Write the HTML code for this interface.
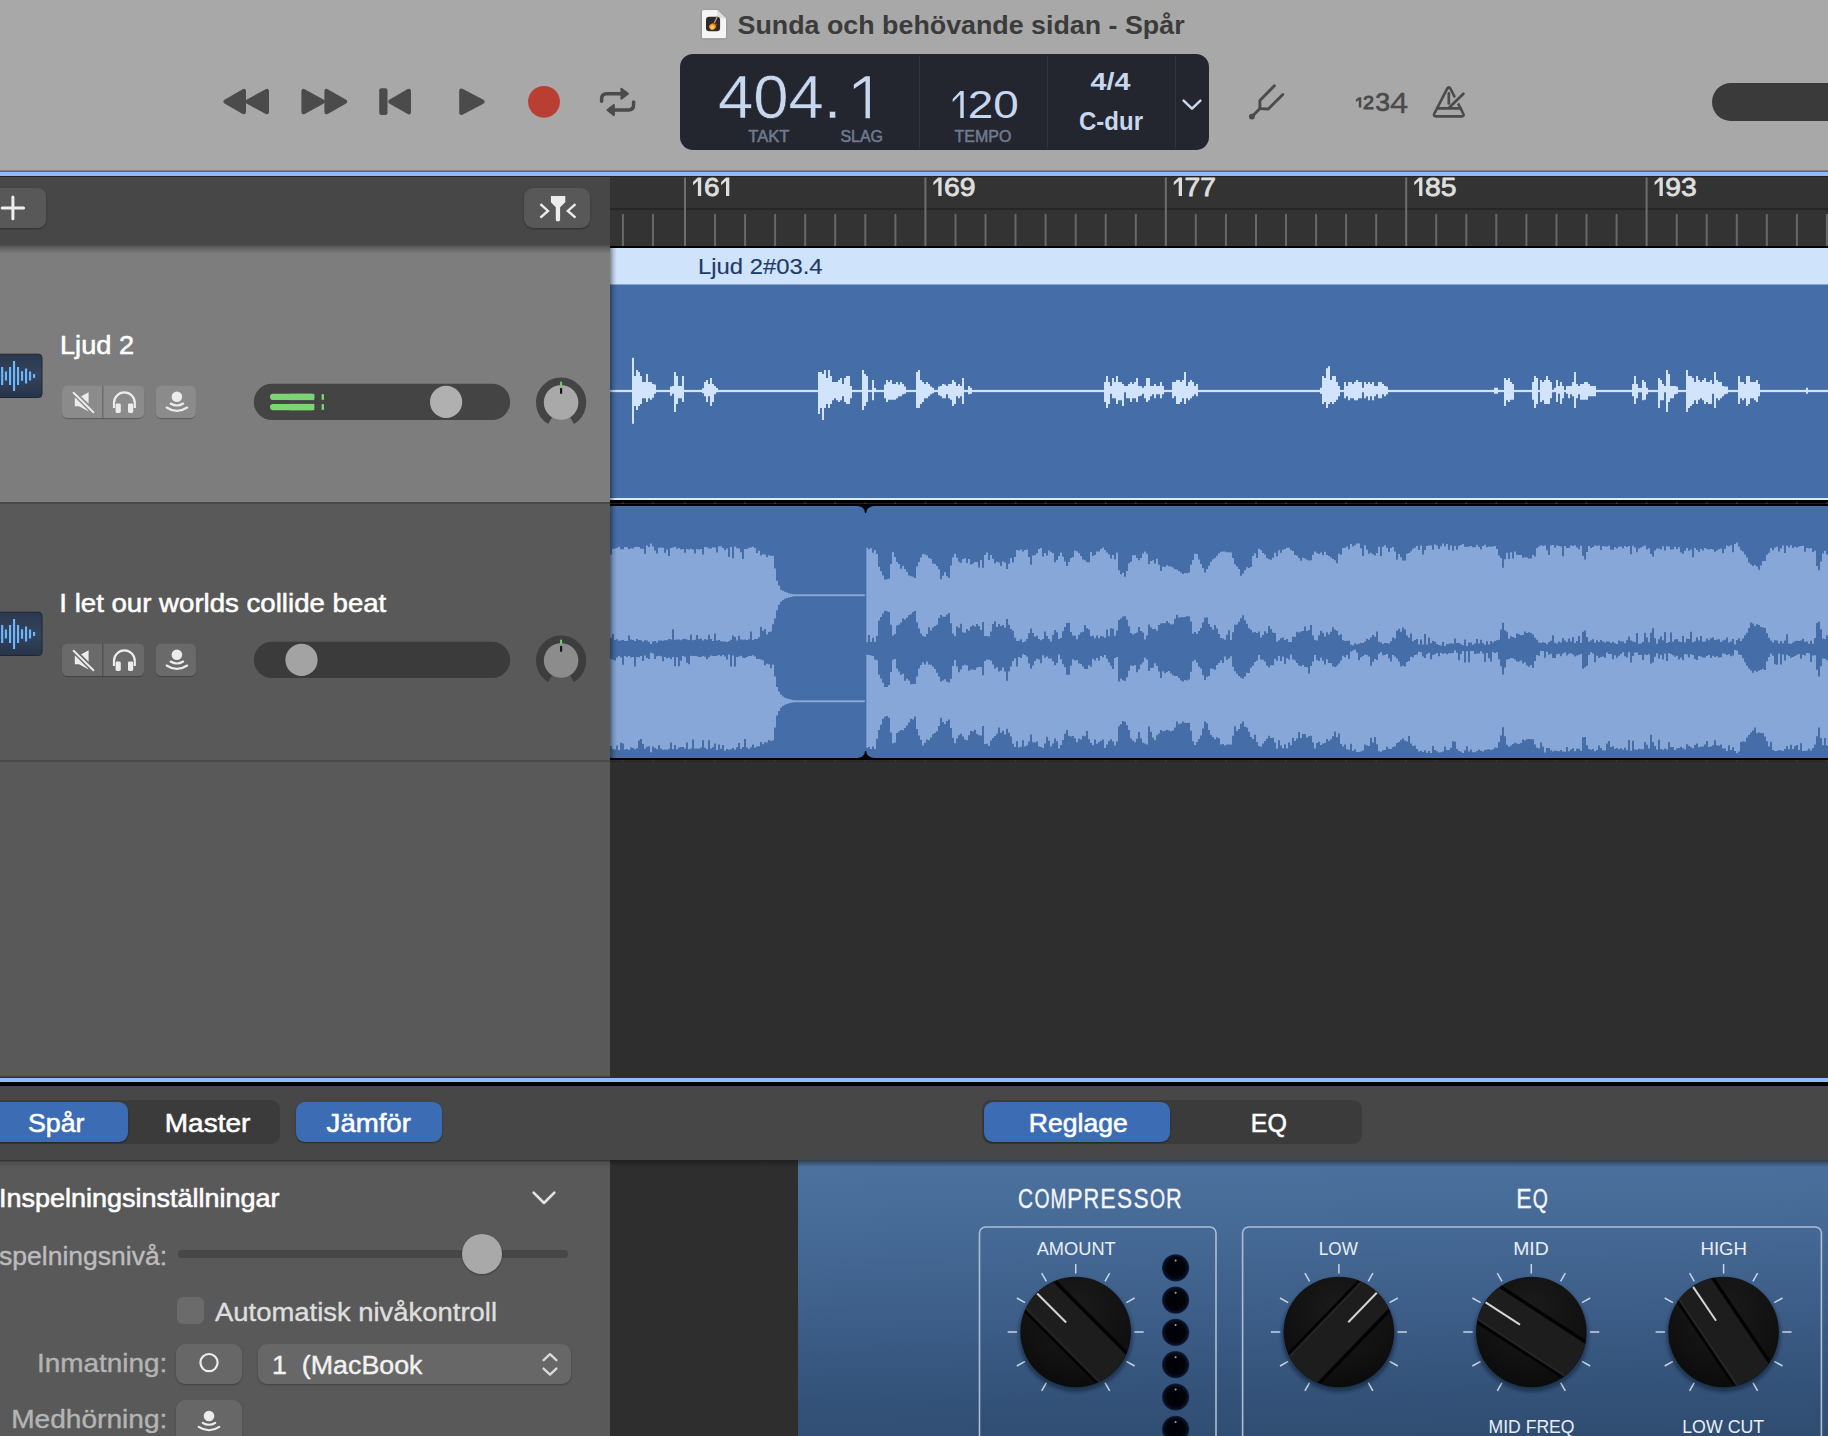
<!DOCTYPE html>
<html lang="sv"><head><meta charset="utf-8"><title>Sunda och behövande sidan - Spår</title>
<style>html,body{margin:0;padding:0;width:1828px;height:1436px;overflow:hidden;}body{background:#2e2e2e;}#app{position:absolute;left:0;top:0;width:1828px;height:1436px;overflow:hidden;background:#2e2e2e;font-family:"Liberation Sans",sans-serif;}svg{display:block;overflow:hidden}text{white-space:pre}</style>
</head><body><div id="app">
<!-- tracks area -->
<div style="position:absolute;left:610px;top:246px;width:1218px;height:832px;background:#2e2e2e;"></div>
<div style="position:absolute;left:610px;top:246px;width:1218px;height:2px;background:#000;"></div>
<div style="position:absolute;left:610px;top:248px;width:1218px;height:36px;background:#cfe3fb;"></div>
<div style="position:absolute;left:610px;top:284px;width:1218px;height:214px;background:#456da7;"></div>
<div style="position:absolute;left:610px;top:283.5px;width:1218px;height:1.5px;background:linear-gradient(#dcebff,#39609c);"></div>
<div style="position:absolute;left:610px;top:497.7px;width:1218px;height:2.5px;background:#dbeaff;"></div>
<div style="position:absolute;left:610px;top:500.2px;width:1218px;height:5.8px;background:#000;"></div>
<div style="position:absolute;left:610px;top:502.6px;width:1218px;height:1.2px;background:#1e1e1e;"></div>
<div style="position:absolute;left:610px;top:506px;width:255px;height:252px;background:#456da7;border-radius:0 5.5px 5.5px 0;"></div>
<div style="position:absolute;left:866.2px;top:506px;width:971.8px;height:252px;background:#456da7;border-radius:5.5px 0 0 5.5px;"></div>
<div style="position:absolute;left:610px;top:758px;width:1218px;height:2px;background:#000;"></div>
<div style="position:absolute;left:610px;top:760.6px;width:1218px;height:1.2px;background:#262626;"></div>
<svg style="position:absolute;left:610px;top:246px" width="1218" height="832" viewBox="610 246 1218 832"><defs><linearGradient id="lsh" x1="0" y1="0" x2="1" y2="0"><stop offset="0" stop-color="#000" stop-opacity="0.42"/><stop offset="0.5" stop-color="#000" stop-opacity="0.14"/><stop offset="1" stop-color="#000" stop-opacity="0"/></linearGradient></defs><rect x="610" y="389.9" width="1218" height="2.2" fill="#d2e4fb"/><path d="M632 391V357.8H634V376H636V370.1H638V372.1H640V376H642V382H644V382H646V374H648V382H650V382H652V384H654V384.4H656V391V393.8H654V397.7H652V399.7H650V398.2H648V402H646V398.2H644V398.2H642V404H640V406H638V410H636V406H634V423.8H632ZM670 391V386.4H672V385.9H674V372.1H676V376H678V385.9H680V385.9H682V376H684V391V402.1H682V398.2H680V398.2H678V404H676V412H674V393.8H672V395.7H670ZM702 391V388.3H704V382H706V380H708V384H710V378H712V384H714V386H716V388H718V391V392.3H716V394.2H714V402H712V406H710V396.2H708V402.1H706V396.2H704V393.3H702ZM818 391V372.1H820V372.1H822V374H824V370.1H826V378H828V370.1H830V376H832V382H834V382H836V382H838V380H840V378H842V384H844V378H846V376H848V376H850V386H852V391V398.2H850V404H848V404H846V402.1H844V396.2H842V400.2H840V402.1H838V400.2H836V398.2H834V400.2H832V404H830V408H828V404H826V408H824V419.9H822V408H820V413.9H818ZM862 391V370.1H864V374H866V376H868V391V402H866V406H864V410H862ZM872 391V380H874V388H876V391V392H874V400.2H872ZM884 391V384.4H886V380H888V382H890V380H892V384H894V384H896V382H898V384.4H900V382H902V384H904V386.4H906V391V393.8H904V394.2H902V396.2H900V396.2H898V398.2H896V399.7H894V399.7H892V399.7H890V399.7H888V402.1H886V398.2H884ZM916 391V372.1H918V370.1H920V380H922V382H924V384H926V382H928V384H930V386.4H932V387.8H934V391V393.3H932V394.2H930V396.2H928V398.2H926V398.2H924V402.1H922V404H920V408H918V408H916ZM938 391V386.4H940V385.9H942V384H944V384.4H946V386H948V384H950V384H952V380H954V382H956V386H958V384H960V386H962V378H964V391V404H962V396.2H960V398.2H958V396.2H956V404H954V406H952V399.7H950V398.2H948V394.2H946V398.2H944V398.2H942V396.2H940V395.2H938ZM968 391V385.9H970V387.8H972V391V393.8H970V394.2H968ZM1104 391V382H1106V376H1108V382H1110V386H1112V378H1114V382H1116V376H1118V382H1120V382H1122V384H1124V386H1126V386H1128V384H1130V382H1132V384H1134V382H1136V378H1138V386H1140V386H1142V387.8H1144V386H1146V378H1148V378H1150V386H1152V386H1154V384H1156V386H1158V386H1160V382H1162V386H1164V391V394.2H1162V398.2H1160V394.2H1158V394.2H1156V398.2H1154V394.2H1152V396.2H1150V400.2H1148V402H1146V398.2H1144V393.8H1142V395.7H1140V396.2H1138V402H1136V398.2H1134V398.2H1132V402H1130V398.2H1128V398.2H1126V392.3H1124V406H1122V400.2H1120V400.2H1118V404H1116V398.2H1114V398.2H1112V393.8H1110V404H1108V408H1106V402H1104ZM1172 391V382H1174V382H1176V380H1178V380H1180V382H1182V380H1184V372.1H1186V386H1188V382H1190V380H1192V382H1194V386H1196V384H1198V391V396.2H1196V394.2H1194V396.2H1192V398.2H1190V400.2H1188V398.2H1186V404H1184V398.2H1182V402H1180V404H1178V404H1176V396.2H1174V398.2H1172ZM1320 391V387.8H1322V376H1324V378H1326V368.2H1328V366.2H1330V380H1332V376H1334V376H1336V382H1338V386H1340V391V396.2H1338V399.7H1336V402H1334V404H1332V402H1330V404H1328V408H1326V402H1324V404H1322V393.8H1320ZM1344 391V382H1346V386H1348V382H1350V382H1352V384H1354V382H1356V380H1358V382H1360V382H1362V387.8H1364V382H1366V384H1368V382H1370V384H1372V382H1374V386H1376V386H1378V382H1380V382H1382V384H1384V386H1386V386.4H1388V391V394.2H1386V396.2H1384V394.2H1382V398.2H1380V398.2H1378V394.2H1376V396.2H1374V400.2H1372V396.2H1370V400.2H1368V396.2H1366V398.2H1364V392.3H1362V398.2H1360V398.2H1358V400.2H1356V400.2H1354V398.2H1352V398.2H1350V400.2H1348V396.2H1346V398.2H1344ZM1494 391V387.8H1496V387.8H1498V391V393.8H1496V393.8H1494ZM1504 391V378H1506V380H1508V378H1510V382H1512V384H1514V391V399.7H1512V399.7H1510V402H1508V400.2H1506V406H1504ZM1532 391V382H1534V376H1536V378H1538V391V404H1536V408H1534V399.7H1532ZM1540 391V380H1542V382H1544V380H1546V376H1548V380H1550V382H1552V389.8H1554V387.8H1556V391V392H1554V392.3H1552V398.2H1550V404H1548V404H1546V404H1544V400.2H1542V402H1540ZM1556 391V380H1558V386H1560V382H1562V386H1564V391V398.2H1562V404H1560V393.8H1558V402H1556ZM1566 391V386H1568V386H1570V386H1572V382H1574V372.1H1576V384H1578V386H1580V384H1582V384H1584V382H1586V382H1588V384H1590V386H1592V386H1594V386H1596V391V396.2H1594V396.2H1592V396.2H1590V396.2H1588V399.7H1586V399.7H1584V399.7H1582V399.7H1580V394.2H1578V398.2H1576V408H1574V396.2H1572V394.2H1570V398.2H1568V393.8H1566ZM1632 391V384H1634V376H1636V384H1638V388H1640V388H1642V391V392.3H1640V392.3H1638V398.2H1636V404H1634V396.2H1632ZM1642 391V380H1644V382H1646V387.8H1648V391V394.2H1646V399.7H1644V400.2H1642ZM1658 391V378H1660V380H1662V384H1664V386H1666V370.1H1668V374H1670V386H1672V386H1674V386H1676V386.4H1678V391V393.8H1676V394.2H1674V398.2H1672V398.2H1670V402H1668V412H1666V392.3H1664V400.2H1662V400.2H1660V408H1658ZM1686 391V370.1H1688V376H1690V376H1692V378H1694V382H1696V376H1698V380H1700V382H1702V380H1704V378H1706V382H1708V382H1710V380H1712V384H1714V372.1H1716V380H1718V382H1720V382H1722V386H1724V386.4H1726V386.4H1728V391V393.8H1726V394.2H1724V396.2H1722V398.2H1720V400.2H1718V398.2H1716V408H1714V393.8H1712V404H1710V404H1708V402H1706V404H1704V400.2H1702V398.2H1700V399.7H1698V404H1696V400.2H1694V404H1692V406H1690V408H1688V412H1686ZM1738 391V376H1740V382H1742V382H1744V384H1746V376H1748V376H1750V382H1752V382H1754V382H1756V380H1758V384H1760V391V396.2H1758V402H1756V400.2H1754V398.2H1752V398.2H1750V404H1748V406H1746V398.2H1744V400.2H1742V398.2H1740V404H1738ZM1806 391V387.8H1808V391V393.8H1806Z" fill="#d2e4fb"/><path d="M610 595.3V554.4H612V549.0H614V548.6H616V547.9H618V546.8H620V549.2H622V549.3H624V546.9H626V547.2H628V549.2H630V548.3H632V548.5H634V547.0H636V546.8H638V546.9H640V548.8H642V548.7H644V553.9H646V545.5H648V547.1H650V543.6H652V546.5H654V550.5H656V553.4H658V547.8H660V547.5H662V547.8H664V552.7H666V549.4H668V556.0H670V548.1H672V547.4H674V546.8H676V548.7H678V548.0H680V549.6H682V549.1H684V552.7H686V548.9H688V549.4H690V548.7H692V549.5H694V553.4H696V549.1H698V549.4H700V548.9H702V554.6H704V547.1H706V547.3H708V548.6H710V548.6H712V547.3H714V547.5H716V552.4H718V546.2H720V546.3H722V548.1H724V550.2H726V548.4H728V557.1H730V547.1H732V558.3H734V546.5H736V548.3H738V548.4H740V552.2H742V558.9H744V549.1H746V548.9H748V547.7H750V547.4H752V546.7H754V548.1H756V552.9H758V550.7H760V555.6H762V554.2H764V554.6H766V557.2H768V555.3H770V556.1H772V555.8H774V568.4H776V580.8H778V585.6H780V589.7H782V590.7H784V591.8H786V592.6H788V593.2H790V593.7H792V594.0H794V594.3H796V594.3H798V594.3H800V594.3H802V594.3H804V594.3H806V594.3H808V594.3H810V594.3H812V594.3H814V594.3H816V594.3H818V594.3H820V594.3H822V594.3H824V594.3H826V594.3H828V594.3H830V594.3H832V594.3H834V594.3H836V594.3H838V594.3H840V594.3H842V594.3H844V594.3H846V594.3H848V594.3H850V594.3H852V594.3H854V594.3H856V594.3H858V594.3H860V594.3H862V594.3H864V594.3H866V547.7H868V549.2H870V548.3H872V552.8H874V549.9H876V554.1H878V566.7H880V571.3H882V575.6H884V579.7H886V579.2H888V578.8H890V564.0H892V551.9H894V557.0H896V562.1H898V564.1H900V568.7H902V565.8H904V568.9H906V571.8H908V575.6H910V576.2H912V576.7H914V578.0H916V566.4H918V562.0H920V557.5H922V554.0H924V554.6H926V555.4H928V558.1H930V558.8H932V563.6H934V563.9H936V566.0H938V569.2H940V579.3H942V575.7H944V572.2H946V576.2H948V578.0H950V565.4H952V557.4H954V553.8H956V557.8H958V561.8H960V562.7H962V558.9H964V558.2H966V563.1H968V559.0H970V564.5H972V563.6H974V562.1H976V562.1H978V567.5H980V560.0H982V567.8H984V554.9H986V552.4H988V560.0H990V555.0H992V558.7H994V563.4H996V561.8H998V562.4H1000V566.0H1002V561.4H1004V562.5H1006V568.9H1008V563.7H1010V558.1H1012V562.4H1014V557.0H1016V549.9H1018V550.6H1020V549.6H1022V551.6H1024V549.9H1026V549.6H1028V557.0H1030V564.8H1032V555.6H1034V555.1H1036V553.2H1038V549.1H1040V547.9H1042V556.6H1044V552.9H1046V555.5H1048V550.6H1050V552.1H1052V552.9H1054V562.2H1056V560.1H1058V556.0H1060V552.4H1062V556.8H1064V561.6H1066V565.9H1068V561.9H1070V558.1H1072V557.0H1074V550.6H1076V551.2H1078V553.3H1080V555.9H1082V559.4H1084V560.3H1086V562.3H1088V562.3H1090V551.9H1092V555.9H1094V555.0H1096V551.6H1098V551.5H1100V548.9H1102V547.6H1104V550.0H1106V552.4H1108V554.4H1110V558.5H1112V555.0H1114V559.4H1116V552.4H1118V570.3H1120V574.2H1122V572.7H1124V576.7H1126V571.1H1128V563.3H1130V561.7H1132V555.2H1134V555.0H1136V558.0H1138V560.3H1140V557.9H1142V553.6H1144V551.4H1146V553.7H1148V564.1H1150V560.9H1152V560.2H1154V563.6H1156V558.7H1158V564.7H1160V571.1H1162V566.6H1164V566.9H1166V565.3H1168V566.2H1170V566.4H1172V567.5H1174V569.2H1176V569.5H1178V571.1H1180V572.5H1182V574.0H1184V573.1H1186V573.2H1188V572.6H1190V564.8H1192V559.9H1194V553.7H1196V554.1H1198V559.6H1200V564.0H1202V567.9H1204V572.6H1206V568.9H1208V565.8H1210V561.7H1212V559.2H1214V558.0H1216V555.7H1218V553.3H1220V551.7H1222V551.5H1224V551.5H1226V552.2H1228V552.2H1230V552.6H1232V557.9H1234V564.2H1236V566.5H1238V569.1H1240V575.7H1242V573.4H1244V570.3H1246V567.3H1248V568.1H1250V567.1H1252V556.1H1254V553.2H1256V557.9H1258V548.8H1260V550.1H1262V552.9H1264V554.4H1266V558.1H1268V559.3H1270V559.8H1272V557.8H1274V552.8H1276V556.3H1278V550.3H1280V552.8H1282V549.8H1284V549.1H1286V547.8H1288V547.8H1290V550.1H1292V551.1H1294V555.0H1296V555.5H1298V557.9H1300V560.7H1302V557.8H1304V558.5H1306V559.8H1308V560.5H1310V560.2H1312V554.8H1314V551.6H1316V552.9H1318V554.1H1320V552.6H1322V555.3H1324V551.7H1326V555.1H1328V556.0H1330V557.6H1332V559.0H1334V560.3H1336V563.2H1338V553.8H1340V554.8H1342V548.1H1344V547.7H1346V546.6H1348V549.2H1350V543.9H1352V546.5H1354V545.3H1356V543.6H1358V543.5H1360V548.2H1362V555.9H1364V545.3H1366V549.7H1368V553.8H1370V552.8H1372V554.2H1374V555.4H1376V553.1H1378V546.7H1380V555.9H1382V546.7H1384V545.3H1386V547.8H1388V552.1H1390V548.0H1392V546.9H1394V551.5H1396V559.7H1398V553.9H1400V557.3H1402V560.6H1404V560.4H1406V553.8H1408V553.0H1410V551.2H1412V548.7H1414V547.7H1416V546.0H1418V550.0H1420V545.6H1422V554.6H1424V550.0H1426V546.1H1428V545.4H1430V545.6H1432V549.7H1434V544.4H1436V545.6H1438V549.1H1440V546.3H1442V543.5H1444V546.5H1446V543.9H1448V549.7H1450V545.4H1452V550.8H1454V545.9H1456V549.7H1458V545.8H1460V544.9H1462V544.0H1464V546.7H1466V547.1H1468V546.5H1470V546.0H1472V547.2H1474V547.3H1476V544.8H1478V546.9H1480V549.5H1482V545.9H1484V544.8H1486V547.3H1488V546.6H1490V546.8H1492V546.6H1494V546.0H1496V549.1H1498V555.5H1500V558.0H1502V567.7H1504V559.2H1506V552.8H1508V559.0H1510V552.2H1512V558.4H1514V551.6H1516V554.7H1518V554.9H1520V555.0H1522V557.8H1524V557.2H1526V557.6H1528V558.6H1530V558.4H1532V555.0H1534V556.4H1536V548.1H1538V546.6H1540V545.2H1542V546.0H1544V545.6H1546V550.3H1548V555.0H1550V545.4H1552V545.1H1554V547.4H1556V545.5H1558V545.9H1560V546.6H1562V556.2H1564V546.0H1566V547.9H1568V547.7H1570V545.5H1572V545.9H1574V545.2H1576V547.6H1578V549.3H1580V545.7H1582V555.8H1584V559.5H1586V552.0H1588V546.0H1590V548.0H1592V547.1H1594V545.4H1596V545.7H1598V545.4H1600V549.9H1602V545.9H1604V546.5H1606V546.5H1608V545.7H1610V549.7H1612V549.7H1614V547.2H1616V548.4H1618V546.8H1620V546.6H1622V548.3H1624V546.0H1626V547.0H1628V546.1H1630V554.3H1632V545.7H1634V547.5H1636V552.3H1638V548.4H1640V547.6H1642V546.6H1644V545.4H1646V549.5H1648V548.2H1650V554.0H1652V556.7H1654V550.6H1656V548.5H1658V548.4H1660V549.4H1662V546.3H1664V550.5H1666V546.3H1668V546.4H1670V549.4H1672V549.2H1674V546.7H1676V548.9H1678V547.2H1680V552.6H1682V553.8H1684V550.8H1686V548.0H1688V550.8H1690V549.5H1692V557.3H1694V547.9H1696V550.0H1698V551.8H1700V549.0H1702V550.4H1704V548.1H1706V548.9H1708V549.5H1710V548.9H1712V549.6H1714V551.8H1716V550.4H1718V549.3H1720V548.4H1722V553.3H1724V548.8H1726V545.5H1728V546.2H1730V545.2H1732V552.3H1734V544.1H1736V542.4H1738V546.6H1740V550.2H1742V551.5H1744V554.4H1746V557.4H1748V562.4H1750V564.4H1752V566.0H1754V564.9H1756V566.4H1758V569.8H1760V565.5H1762V561.1H1764V560.9H1766V554.8H1768V552.7H1770V548.1H1772V550.3H1774V547.4H1776V546.8H1778V551.6H1780V548.4H1782V545.4H1784V552.9H1786V545.6H1788V547.6H1790V545.3H1792V548.1H1794V546.8H1796V547.5H1798V546.4H1800V545.9H1802V545.7H1804V551.7H1806V548.0H1808V548.5H1810V547.9H1812V552.1H1814V550.6H1816V566.0H1818V570.2H1820V561.5H1822V553.6H1824V550.8H1826V554.6H1828V595.3V635.2H1826V638.9H1824V638.6H1822V629.2H1820V621.4H1818V623.1H1816V638.0H1814V643.7H1812V640.8H1810V643.7H1808V641.6H1806V641.8H1804V638.7H1802V640.5H1800V641.0H1798V640.8H1796V641.2H1794V642.6H1792V643.7H1790V643.4H1788V634.2H1786V640.4H1784V643.3H1782V641.0H1780V643.6H1778V640.5H1776V640.2H1774V642.4H1772V640.4H1770V637.8H1768V633.3H1766V627.9H1764V627.5H1762V627.1H1760V625.1H1758V624.3H1756V626.3H1754V623.5H1752V622.5H1750V628.0H1748V632.8H1746V635.2H1744V638.6H1742V640.9H1740V638.3H1738V640.0H1736V644.6H1734V639.0H1732V641.5H1730V642.4H1728V637.6H1726V639.8H1724V640.4H1722V642.1H1720V639.2H1718V639.6H1716V640.1H1714V637.6H1712V638.2H1710V640.3H1708V638.6H1706V641.5H1704V641.7H1702V635.9H1700V640.5H1698V637.2H1696V641.2H1694V642.3H1692V631.7H1690V639.0H1688V638.7H1686V642.6H1684V636.0H1682V642.0H1680V641.6H1678V639.1H1676V639.5H1674V641.8H1672V632.4H1670V641.9H1668V643.1H1666V631.9H1664V640.3H1662V636.4H1660V639.3H1658V643.8H1656V638.3H1654V628.3H1652V632.7H1650V642.2H1648V637.6H1646V632.7H1644V642.0H1642V643.6H1640V643.7H1638V633.0H1636V642.0H1634V641.6H1632V640.6H1630V636.4H1628V640.3H1626V643.3H1624V641.4H1622V641.6H1620V640.5H1618V644.1H1616V643.3H1614V641.8H1612V642.9H1610V641.5H1608V641.5H1606V642.6H1604V641.6H1602V639.9H1600V641.9H1598V640.2H1596V642.7H1594V639.2H1592V640.4H1590V641.8H1588V637.0H1586V630.4H1584V631.8H1582V643.1H1580V636.0H1578V641.1H1576V643.1H1574V637.3H1572V641.4H1570V638.4H1568V641.9H1566V640.4H1564V638.1H1562V642.6H1560V641.6H1558V643.4H1556V642.8H1554V635.2H1552V640.8H1550V642.1H1548V644.2H1546V642.8H1544V642.3H1542V642.9H1540V642.4H1538V639.7H1536V637.7H1534V634.6H1532V633.1H1530V632.3H1528V632.9H1526V631.6H1524V635.1H1522V635.3H1520V634.3H1518V633.5H1516V638.1H1514V636.9H1512V636.3H1510V638.7H1508V631.7H1506V630.3H1504V622.8H1502V629.4H1500V639.7H1498V640.2H1496V641.1H1494V642.6H1492V641.1H1490V644.6H1488V641.3H1486V644.7H1484V642.9H1482V639.7H1480V643.5H1478V639.1H1476V643.5H1474V644.8H1472V642.4H1470V642.4H1468V645.9H1466V639.4H1464V645.2H1462V644.2H1460V643.0H1458V643.1H1456V638.4H1454V643.7H1452V643.2H1450V643.8H1448V643.9H1446V646.0H1444V641.7H1442V645.4H1440V645.0H1438V643.9H1436V641.7H1434V641.0H1432V643.2H1430V637.4H1428V644.4H1426V633.9H1424V644.4H1422V639.6H1420V644.4H1418V639.0H1416V640.0H1414V641.2H1412V633.4H1410V637.8H1408V635.6H1406V629.4H1404V627.4H1402V631.8H1400V628.8H1398V630.8H1396V638.4H1394V637.5H1392V641.3H1390V643.4H1388V643.1H1386V643.0H1384V643.9H1382V642.5H1380V641.7H1378V631.4H1376V636.8H1374V634.9H1372V637.6H1370V639.8H1368V638.8H1366V641.4H1364V642.9H1362V642.8H1360V643.8H1358V644.2H1356V643.4H1354V645.4H1352V644.7H1350V640.7H1348V640.7H1346V640.9H1344V640.2H1342V634.3H1340V635.3H1338V630.7H1336V629.8H1334V627.3H1332V631.7H1330V634.6H1328V632.2H1326V636.6H1324V632.8H1322V630.8H1320V635.3H1318V640.5H1316V640.0H1314V635.4H1312V625.0H1310V630.1H1308V630.9H1306V626.6H1304V630.9H1302V631.5H1300V632.4H1298V631.7H1296V637.0H1294V636.4H1292V642.1H1290V641.9H1288V638.9H1286V640.0H1284V637.4H1282V638.2H1280V640.2H1278V641.7H1276V632.9H1274V632.5H1272V628.9H1270V626.0H1268V633.2H1266V631.3H1264V635.1H1262V637.5H1260V631.4H1258V633.0H1256V631.9H1254V632.4H1252V629.8H1250V628.2H1248V623.8H1246V620.2H1244V615.3H1242V618.3H1240V621.7H1238V624.5H1236V624.8H1234V632.2H1232V639.9H1230V630.3H1228V634.8H1226V639.8H1224V638.4H1222V637.9H1220V633.9H1218V628.5H1216V625.0H1214V629.7H1212V626.9H1210V623.9H1208V617.6H1206V617.4H1204V622.6H1202V627.9H1200V631.0H1198V634.1H1196V631.9H1194V633.4H1192V621.6H1190V616.2H1188V616.3H1186V616.9H1184V617.2H1182V617.2H1180V617.6H1178V614.7H1176V618.7H1174V624.3H1172V624.5H1170V623.0H1168V621.1H1166V623.3H1164V623.2H1162V623.6H1160V625.1H1158V630.7H1156V629.1H1154V629.3H1152V627.5H1150V624.5H1148V635.6H1146V639.6H1144V632.5H1142V630.9H1140V627.1H1138V632.6H1136V633.6H1134V634.5H1132V633.0H1130V626.3H1128V619.8H1126V616.2H1124V616.4H1122V618.6H1120V620.0H1118V630.4H1116V635.8H1114V628.7H1112V628.2H1110V636.2H1108V629.4H1106V637.8H1104V636.5H1102V636.1H1100V638.2H1098V635.6H1096V638.3H1094V635.8H1092V636.2H1090V629.5H1088V628.3H1086V624.9H1084V631.7H1082V632.6H1080V634.7H1078V639.3H1076V635.7H1074V635.4H1072V632.1H1070V622.7H1068V623.0H1066V627.1H1064V631.3H1062V638.0H1060V638.9H1058V632.3H1056V630.0H1054V634.7H1052V641.4H1050V638.9H1048V635.9H1046V631.5H1044V639.1H1042V640.3H1040V639.0H1038V635.7H1036V636.8H1034V633.1H1032V628.4H1030V633.3H1028V639.1H1026V641.5H1024V642.2H1022V639.2H1020V640.8H1018V641.1H1016V637.7H1014V630.8H1012V628.9H1010V624.8H1008V619.0H1006V627.7H1004V625.0H1002V626.1H1000V624.1H998V627.0H996V621.2H994V623.9H992V631.4H990V636.4H988V636.0H986V635.9H984V622.0H982V630.0H980V626.2H978V624.1H976V626.5H974V625.3H972V626.4H970V630.7H968V629.1H966V632.8H964V632.3H962V623.7H960V627.8H958V626.5H956V636.3H954V633.4H952V623.3H950V613.1H948V614.4H946V616.7H944V616.8H942V615.1H940V617.9H938V624.7H936V626.1H934V627.6H932V630.4H930V627.2H928V633.9H926V636.8H924V636.1H922V633.4H920V628.6H918V622.3H916V611.0H914V612.1H912V614.2H910V614.9H908V617.7H906V619.4H904V618.4H902V622.4H900V624.8H898V625.5H896V634.0H894V635.4H892V624.7H890V612.1H888V611.2H886V610.8H884V613.5H882V616.9H880V620.4H878V636.1H876V642.1H874V637.8H872V641.9H870V635.1H868V642.2H866V596.2H864V596.2H862V596.2H860V596.2H858V596.2H856V596.2H854V596.2H852V596.2H850V596.2H848V596.2H846V596.2H844V596.2H842V596.2H840V596.2H838V596.2H836V596.2H834V596.2H832V596.2H830V596.2H828V596.2H826V596.2H824V596.2H822V596.2H820V596.2H818V596.2H816V596.2H814V596.2H812V596.2H810V596.2H808V596.2H806V596.2H804V596.2H802V596.2H800V596.2H798V596.2H796V596.3H794V596.6H792V596.9H790V597.4H788V598.0H786V598.8H784V600.0H782V601.7H780V604.8H778V610.3H776V618.4H774V624.2H772V631.5H770V632.0H768V634.4H766V629.0H764V630.8H762V626.8H760V637.2H758V639.0H756V639.1H754V639.9H752V631.4H750V639.2H748V640.0H746V639.6H744V639.8H742V639.5H740V635.8H738V640.6H736V636.9H734V635.5H732V639.7H730V641.2H728V641.9H726V641.6H724V641.5H722V641.3H720V640.1H718V640.4H716V633.4H714V641.1H712V638.9H710V634.8H708V639.8H706V639.0H704V640.6H702V638.6H700V639.1H698V635.1H696V639.7H694V640.2H692V634.6H690V639.9H688V639.5H686V638.7H684V639.1H682V640.3H680V639.5H678V639.4H676V639.8H674V629.3H672V639.6H670V639.0H668V640.3H666V640.2H664V640.7H662V640.5H660V640.6H658V642.4H656V641.1H654V641.5H652V644.0H650V641.8H648V640.5H646V640.3H644V641.7H642V640.2H640V639.9H638V639.0H636V640.9H634V640.1H632V639.5H630V635.4H628V641.0H626V641.0H624V640.0H622V640.3H620V640.7H618V639.3H616V640.1H614V633.9H612V637.7H610Z" fill="#86a7d7"/><path d="M610 701.2V659.1H612V659.8H614V660.6H616V657.4H618V656.1H620V657.4H622V664.8H624V656.1H626V657.0H628V656.1H630V657.6H632V656.9H634V666.4H636V656.9H638V657.3H640V655.9H642V661.1H644V655.5H646V657.9H648V658.9H650V652.8H652V653.5H654V659.1H656V656.3H658V655.7H660V656.3H662V661.2H664V657.1H666V658.3H668V657.4H670V659.3H672V657.1H674V666.3H676V657.2H678V666.2H680V660.7H682V655.9H684V656.7H686V662.7H688V664.3H690V655.8H692V656.1H694V656.1H696V656.3H698V657.0H700V656.9H702V656.1H704V656.7H706V659.3H708V657.3H710V655.5H712V655.9H714V655.9H716V655.7H718V655.0H720V656.3H722V654.9H724V656.4H726V659.4H728V654.5H730V666.6H732V655.6H734V666.4H736V656.9H738V656.6H740V655.7H742V657.7H744V657.9H746V656.9H748V656.1H750V656.0H752V655.3H754V656.6H756V659.1H758V659.0H760V659.4H762V660.3H764V665.3H766V663.8H768V664.2H770V668.2H772V664.5H774V676.5H776V686.9H778V691.6H780V694.5H782V696.6H784V697.7H786V698.5H788V699.1H790V699.6H792V699.9H794V700.2H796V700.2H798V700.2H800V700.2H802V700.2H804V700.2H806V700.2H808V700.2H810V700.2H812V700.2H814V700.2H816V700.2H818V700.2H820V700.2H822V700.2H824V700.2H826V700.2H828V700.2H830V700.2H832V700.2H834V700.2H836V700.2H838V700.2H840V700.2H842V700.2H844V700.2H846V700.2H848V700.2H850V700.2H852V700.2H854V700.2H856V700.2H858V700.2H860V700.2H862V700.2H864V700.2H866V654.8H868V655.1H870V655.5H872V656.1H874V659.5H876V660.3H878V674.7H880V678.6H882V682.7H884V686.9H886V687.1H888V685.1H890V672.0H892V659.8H894V659.1H896V668.6H898V671.6H900V674.8H902V673.7H904V680.7H906V678.8H908V680.4H910V684.2H912V683.9H914V684.0H916V676.4H918V668.5H920V665.0H922V662.3H924V664.6H926V661.5H928V664.4H930V664.8H932V666.8H934V669.0H936V672.7H938V676.4H940V681.5H942V680.4H944V679.3H946V681.8H948V682.4H950V678.7H952V666.0H954V659.9H956V666.5H958V672.3H960V669.6H962V665.8H964V664.7H966V665.4H968V670.7H970V669.4H972V669.6H974V669.9H976V667.6H978V667.0H980V667.0H982V675.2H984V660.9H986V659.4H988V659.8H990V660.6H992V664.5H994V668.6H996V667.3H998V671.5H1000V670.6H1002V667.5H1004V671.5H1006V680.7H1008V671.4H1010V666.5H1012V661.0H1014V658.2H1016V666.6H1018V656.9H1020V658.1H1022V654.2H1024V655.1H1026V656.6H1028V663.4H1030V668.7H1032V665.5H1034V661.0H1036V658.8H1038V659.6H1040V663.2H1042V655.3H1044V657.7H1046V656.6H1048V658.4H1050V658.4H1052V661.3H1054V665.2H1056V662.9H1058V654.4H1060V659.3H1062V664.2H1064V667.3H1066V674.8H1068V674.8H1070V665.7H1072V659.2H1074V660.6H1076V659.9H1078V663.5H1080V663.9H1082V666.5H1084V668.9H1086V668.9H1088V665.3H1090V666.7H1092V658.8H1094V660.6H1096V658.0H1098V660.6H1100V655.9H1102V657.3H1104V655.1H1106V658.7H1108V662.2H1110V665.8H1112V669.0H1114V658.1H1116V657.0H1118V681.5H1120V678.5H1122V680.2H1124V680.9H1126V677.2H1128V670.7H1130V665.5H1132V666.0H1134V665.0H1136V672.2H1138V669.3H1140V664.4H1142V662.3H1144V657.8H1146V659.4H1148V671.1H1150V668.0H1152V667.8H1154V663.3H1156V666.1H1158V671.4H1160V678.1H1162V671.3H1164V673.2H1166V672.1H1168V671.0H1170V673.5H1172V675.2H1174V676.0H1176V675.9H1178V678.0H1180V680.6H1182V681.5H1184V680.1H1186V680.5H1188V679.5H1190V671.7H1192V661.2H1194V659.8H1196V662.4H1198V666.7H1200V668.4H1202V675.1H1204V679.9H1206V676.8H1208V676.0H1210V668.5H1212V668.7H1214V669.8H1216V665.0H1218V663.1H1220V660.4H1222V663.1H1224V656.4H1226V659.7H1228V658.6H1230V656.3H1232V666.8H1234V671.2H1236V673.8H1238V676.0H1240V677.8H1242V678.8H1244V676.5H1246V672.7H1248V672.9H1250V667.8H1252V665.7H1254V662.1H1256V660.4H1258V655.1H1260V659.4H1262V659.8H1264V661.4H1266V665.6H1268V667.5H1270V665.3H1272V665.3H1274V658.7H1276V660.7H1278V656.1H1280V661.0H1282V656.6H1284V664.1H1286V658.2H1288V659.4H1290V654.6H1292V659.4H1294V660.2H1296V663.0H1298V665.5H1300V666.2H1302V664.9H1304V666.9H1306V667.2H1308V673.4H1310V665.9H1312V661.4H1314V655.0H1316V659.9H1318V660.9H1320V657.8H1322V660.7H1324V664.6H1326V659.3H1328V663.0H1330V663.1H1332V666.2H1334V667.0H1336V665.7H1338V663.6H1340V660.5H1342V655.7H1344V657.2H1346V655.1H1348V658.7H1350V651.5H1352V650.4H1354V649.5H1356V652.5H1358V660.3H1360V657.2H1362V656.0H1364V654.5H1366V654.9H1368V656.6H1370V665.7H1372V661.8H1374V658.9H1376V660.0H1378V653.7H1380V652.3H1382V655.2H1384V655.1H1386V654.0H1388V658.2H1390V661.5H1392V655.1H1394V656.6H1396V658.6H1398V661.4H1400V666.4H1402V665.8H1404V666.6H1406V662.1H1408V661.1H1410V656.7H1412V657.2H1414V655.1H1416V654.6H1418V651.8H1420V652.2H1422V656.6H1424V658.0H1426V653.9H1428V652.8H1430V659.2H1432V655.0H1434V654.3H1436V653.1H1438V656.3H1440V652.8H1442V653.8H1444V653.3H1446V654.3H1448V653.3H1450V653.3H1452V653.1H1454V650.3H1456V652.7H1458V660.2H1460V654.1H1462V651.0H1464V662.5H1466V651.3H1468V662.3H1470V651.1H1472V651.1H1474V654.0H1476V653.4H1478V653.4H1480V651.3H1482V653.6H1484V662.0H1486V652.9H1488V658.2H1490V661.4H1492V651.9H1494V652.9H1496V652.2H1498V659.2H1500V666.3H1502V674.4H1504V667.6H1506V659.5H1508V658.9H1510V658.1H1512V658.3H1514V659.6H1516V661.4H1518V661.6H1520V660.6H1522V663.4H1524V662.3H1526V665.5H1528V666.7H1530V665.1H1532V667.9H1534V661.1H1536V655.1H1538V655.7H1540V651.0H1542V651.0H1544V657.7H1546V651.7H1548V654.7H1550V653.7H1552V657.9H1554V658.0H1556V654.3H1558V653.7H1560V656.2H1562V653.5H1564V652.6H1566V655.5H1568V653.8H1570V653.3H1572V654.6H1574V656.6H1576V655.4H1578V654.7H1580V654.0H1582V668.7H1584V667.2H1586V665.8H1588V654.9H1590V652.3H1592V653.6H1594V662.2H1596V655.7H1598V658.0H1600V657.0H1602V656.4H1604V657.7H1606V652.6H1608V654.0H1610V654.1H1612V659.2H1614V655.2H1616V657.8H1618V655.7H1620V654.1H1622V652.3H1624V656.3H1626V657.5H1628V652.3H1630V662.5H1632V655.9H1634V652.6H1636V652.6H1638V655.1H1640V654.7H1642V660.0H1644V654.6H1646V654.9H1648V654.2H1650V663.5H1652V662.5H1654V656.7H1656V653.2H1658V658.6H1660V654.8H1662V659.5H1664V653.4H1666V660.9H1668V653.2H1670V653.9H1672V655.3H1674V656.8H1676V655.7H1678V659.4H1680V657.5H1682V660.3H1684V654.0H1686V654.4H1688V657.6H1690V654.3H1692V655.0H1694V659.1H1696V660.1H1698V656.1H1700V656.5H1702V657.5H1704V657.5H1706V655.9H1708V655.1H1710V657.9H1712V655.8H1714V657.0H1716V656.2H1718V657.6H1720V657.3H1722V653.6H1724V653.7H1726V654.9H1728V654.3H1730V656.2H1732V655.5H1734V649.9H1736V650.6H1738V654.4H1740V655.1H1742V658.2H1744V662.2H1746V665.8H1748V668.4H1750V670.5H1752V672.8H1754V670.7H1756V671.7H1758V670.4H1760V669.7H1762V668.8H1764V670.1H1766V661.2H1768V656.9H1770V653.4H1772V655.8H1774V664.3H1776V664.8H1778V653.8H1780V664.5H1782V654.5H1784V660.4H1786V654.8H1788V656.1H1790V657.7H1792V657.0H1794V656.1H1796V654.8H1798V654.0H1800V658.7H1802V654.7H1804V655.6H1806V653.0H1808V653.2H1810V662.0H1812V655.6H1814V655.3H1816V669.8H1818V676.5H1820V666.2H1822V658.6H1824V658.7H1826V660.2H1828V701.2V745.5H1826V737.9H1824V745.3H1822V737.9H1820V727.5H1818V736.3H1816V744.6H1814V748.0H1812V750.6H1810V748.7H1808V750.4H1806V751.1H1804V751.1H1802V743.2H1800V750.1H1798V745.1H1796V746.1H1794V748.9H1792V744.8H1790V749.3H1788V746.3H1786V748.9H1784V751.1H1782V750.5H1780V750.1H1778V751.0H1776V751.0H1774V749.9H1772V741.8H1770V746.4H1768V741.2H1766V736.4H1764V733.3H1762V733.0H1760V732.4H1758V733.2H1756V727.4H1754V730.5H1752V732.4H1750V735.0H1748V737.4H1746V741.7H1744V741.3H1742V742.1H1740V751.6H1738V753.2H1736V751.1H1734V747.3H1732V750.1H1730V745.2H1728V750.9H1726V748.6H1724V748.6H1722V744.5H1720V745.7H1718V745.3H1716V740.2H1714V745.2H1712V746.5H1710V747.1H1708V741.1H1706V744.4H1704V746.5H1702V746.7H1700V747.3H1698V743.6H1696V745.0H1694V748.2H1692V747.2H1690V745.7H1688V744.3H1686V749.5H1684V748.2H1682V746.7H1680V748.1H1678V748.2H1676V750.1H1674V746.9H1672V747.1H1670V741.9H1668V749.4H1666V748.4H1664V749.7H1662V749.0H1660V739.8H1658V749.4H1656V745.9H1654V741.9H1652V734.8H1650V748.5H1648V744.7H1646V742.0H1644V749.3H1642V749.2H1640V748.8H1638V749.7H1636V749.4H1634V740.7H1632V750.7H1630V740.0H1628V750.2H1626V747.8H1624V749.8H1622V748.3H1620V749.3H1618V747.9H1616V748.8H1614V746.3H1612V747.0H1610V741.1H1608V743.6H1606V750.4H1604V750.3H1602V748.0H1600V745.6H1598V750.0H1596V751.2H1594V749.1H1592V749.8H1590V749.0H1588V745.3H1586V737.1H1584V737.3H1582V750.7H1580V748.7H1578V748.8H1576V751.3H1574V748.3H1572V749.6H1570V751.3H1568V746.9H1566V751.8H1564V751.4H1562V750.1H1560V751.2H1558V751.0H1556V750.6H1554V751.4H1552V750.2H1550V748.0H1548V748.0H1546V752.6H1544V746.5H1542V742.6H1540V748.3H1538V747.8H1536V744.4H1534V739.3H1532V739.3H1530V738.9H1528V739.2H1526V740.4H1524V739.4H1522V743.1H1520V743.9H1518V743.6H1516V742.7H1514V744.1H1512V745.6H1510V746.8H1508V744.7H1506V736.2H1504V727.3H1502V735.4H1500V742.0H1498V747.8H1496V747.6H1494V749.3H1492V749.9H1490V749.2H1488V749.5H1486V750.1H1484V751.4H1482V750.7H1480V749.6H1478V751.0H1476V752.3H1474V752.2H1472V749.6H1470V751.4H1468V746.3H1466V750.2H1464V753.1H1462V751.8H1460V751.0H1458V749.1H1456V741.8H1454V741.2H1452V747.7H1450V750.1H1448V750.0H1446V746.4H1444V751.5H1442V752.3H1440V752.5H1438V751.3H1436V750.0H1434V746.1H1432V753.1H1430V751.0H1428V752.8H1426V750.2H1424V752.1H1422V750.7H1420V751.4H1418V748.9H1416V745.5H1414V746.0H1412V743.5H1410V736.0H1408V741.6H1406V740.5H1404V738.4H1402V740.1H1400V742.0H1398V743.1H1396V746.2H1394V747.1H1392V748.9H1390V748.8H1388V746.8H1386V750.0H1384V750.3H1382V751.8H1380V751.2H1378V744.3H1376V736.9H1374V742.4H1372V737.7H1370V745.9H1368V745.4H1366V744.6H1364V750.4H1362V751.4H1360V752.0H1358V751.9H1356V749.3H1354V750.9H1352V743.8H1350V749.8H1348V749.3H1346V744.6H1344V746.4H1342V744.0H1340V733.6H1338V737.2H1336V731.4H1334V736.3H1332V739.2H1330V740.9H1328V739.0H1326V743.1H1324V743.4H1322V744.9H1320V741.8H1318V743.0H1316V748.6H1314V742.4H1312V735.7H1310V736.2H1308V737.6H1306V734.0H1304V733.9H1302V737.9H1300V732.1H1298V738.6H1296V741.0H1294V737.8H1292V745.2H1290V742.6H1288V748.5H1286V744.2H1284V748.2H1282V745.5H1280V740.3H1278V748.7H1276V742.6H1274V737.8H1272V737.9H1270V735.7H1268V738.8H1266V741.0H1264V743.6H1262V746.7H1260V746.0H1258V741.9H1256V734.8H1254V738.9H1252V736.9H1250V731.7H1248V727.6H1246V726.7H1244V721.6H1242V723.7H1240V728.9H1238V731.0H1236V726.3H1234V735.8H1232V744.4H1230V744.5H1228V744.5H1226V745.4H1224V744.0H1222V744.6H1220V738.3H1218V737.3H1216V739.3H1214V737.1H1212V734.8H1210V730.0H1208V723.2H1206V721.6H1204V728.6H1202V735.6H1200V739.1H1198V742.1H1196V745.0H1194V741.3H1192V730.8H1190V722.7H1188V723.0H1186V722.8H1184V721.6H1182V723.4H1180V724.2H1178V721.5H1176V727.4H1174V730.6H1172V731.2H1170V730.5H1168V729.7H1166V730.8H1164V731.2H1162V730.1H1160V733.6H1158V735.2H1156V740.2H1154V737.6H1152V731.8H1150V726.4H1148V744.6H1146V743.5H1144V742.7H1142V738.3H1140V731.9H1138V738.7H1136V742.2H1134V740.4H1132V738.5H1130V730.0H1128V725.2H1126V721.7H1124V720.9H1122V724.2H1120V726.2H1118V741.4H1116V745.5H1114V741.5H1112V739.3H1110V741.0H1108V744.5H1106V748.0H1104V739.4H1102V740.8H1100V742.1H1098V743.8H1096V739.6H1094V745.2H1092V743.1H1090V739.3H1088V730.9H1086V736.2H1084V735.8H1082V739.6H1080V738.4H1078V742.2H1076V738.2H1074V736.1H1072V736.4H1070V735.8H1068V730.0H1066V733.8H1064V740.0H1062V744.9H1060V748.6H1058V741.3H1056V738.5H1054V743.5H1052V746.6H1050V740.8H1048V736.7H1046V743.4H1044V747.9H1042V747.1H1040V746.4H1038V741.6H1036V742.5H1034V742.3H1032V734.4H1030V741.4H1028V745.5H1026V746.5H1024V740.2H1022V746.8H1020V747.4H1018V741.2H1016V747.1H1014V743.7H1012V736.6H1010V732.8H1008V728.7H1006V734.5H1004V730.7H1002V732.8H1000V727.6H998V733.7H996V735.9H994V738.1H992V740.6H990V746.0H988V743.7H986V743.9H984V725.9H982V735.4H980V735.3H978V733.8H976V729.7H974V731.4H972V731.1H970V735.2H968V740.2H966V739.6H964V736.6H962V733.7H960V735.3H958V738.5H956V743.3H954V737.8H952V728.0H950V719.5H948V720.9H946V724.0H944V722.0H942V717.7H940V725.9H938V731.3H936V733.0H934V734.2H932V737.6H930V740.2H928V739.5H926V742.7H924V745.4H922V739.7H920V735.5H918V729.0H916V716.6H914V719.5H912V718.8H910V722.6H908V725.6H906V728.0H904V730.2H902V729.9H900V731.4H898V733.1H896V742.5H894V743.3H892V732.4H890V717.7H888V716.1H886V716.8H884V718.7H882V724.7H880V729.9H878V738.8H876V748.9H874V746.4H872V749.1H870V746.9H868V747.7H866V702.2H864V702.2H862V702.2H860V702.2H858V702.2H856V702.2H854V702.2H852V702.2H850V702.2H848V702.2H846V702.2H844V702.2H842V702.2H840V702.2H838V702.2H836V702.2H834V702.2H832V702.2H830V702.2H828V702.2H826V702.2H824V702.2H822V702.2H820V702.2H818V702.2H816V702.2H814V702.2H812V702.2H810V702.2H808V702.2H806V702.2H804V702.2H802V702.2H800V702.2H798V702.2H796V702.2H794V702.5H792V702.8H790V703.3H788V703.9H786V704.7H784V705.7H782V707.8H780V711.0H778V715.6H776V727.5H774V740.2H772V741.0H770V740.0H768V742.5H766V742.3H764V744.3H762V741.9H760V746.2H758V746.4H756V747.8H754V744.4H752V747.3H750V749.0H748V747.6H746V739.0H744V747.1H742V748.7H740V742.9H738V747.3H736V749.8H734V747.9H732V749.3H730V749.7H728V748.9H726V750.8H724V745.1H722V748.8H720V744.6H718V750.0H716V743.5H714V747.2H712V748.5H710V740.3H708V749.2H706V747.8H704V740.2H702V747.5H700V748.6H698V748.4H696V748.5H694V739.6H692V748.6H690V749.3H688V742.4H686V748.6H684V747.1H682V747.0H680V747.4H678V749.3H676V745.0H674V749.3H672V742.5H670V748.8H668V749.8H666V749.5H664V749.7H662V748.6H660V745.2H658V749.3H656V748.0H654V746.6H652V752.3H650V746.2H648V746.8H646V748.7H644V744.1H642V738.9H640V740.4H638V748.2H636V749.3H634V748.1H632V747.6H630V749.9H628V748.9H626V749.5H624V743.6H622V742.8H620V750.0H618V745.6H616V749.5H614V749.0H612V746.0H610Z" fill="#86a7d7"/><rect x="864.9" y="506" width="1.4" height="252" fill="#456da7"/><g fill="#3a3a3a"><rect x="622.1" y="502.4" width="1.6" height="1.6"/><rect x="622.1" y="760.4" width="1.6" height="1.6"/><rect x="652.2" y="502.4" width="1.6" height="1.6"/><rect x="652.2" y="760.4" width="1.6" height="1.6"/><rect x="684.2" y="502.4" width="1.6" height="1.6"/><rect x="684.2" y="760.4" width="1.6" height="1.6"/><rect x="714.2" y="502.4" width="1.6" height="1.6"/><rect x="714.2" y="760.4" width="1.6" height="1.6"/><rect x="744.3" y="502.4" width="1.6" height="1.6"/><rect x="744.3" y="760.4" width="1.6" height="1.6"/><rect x="774.4" y="502.4" width="1.6" height="1.6"/><rect x="774.4" y="760.4" width="1.6" height="1.6"/><rect x="804.4" y="502.4" width="1.6" height="1.6"/><rect x="804.4" y="760.4" width="1.6" height="1.6"/><rect x="834.5" y="502.4" width="1.6" height="1.6"/><rect x="834.5" y="760.4" width="1.6" height="1.6"/><rect x="864.5" y="502.4" width="1.6" height="1.6"/><rect x="864.5" y="760.4" width="1.6" height="1.6"/><rect x="894.6" y="502.4" width="1.6" height="1.6"/><rect x="894.6" y="760.4" width="1.6" height="1.6"/><rect x="924.6" y="502.4" width="1.6" height="1.6"/><rect x="924.6" y="760.4" width="1.6" height="1.6"/><rect x="954.7" y="502.4" width="1.6" height="1.6"/><rect x="954.7" y="760.4" width="1.6" height="1.6"/><rect x="984.7" y="502.4" width="1.6" height="1.6"/><rect x="984.7" y="760.4" width="1.6" height="1.6"/><rect x="1014.8" y="502.4" width="1.6" height="1.6"/><rect x="1014.8" y="760.4" width="1.6" height="1.6"/><rect x="1044.8" y="502.4" width="1.6" height="1.6"/><rect x="1044.8" y="760.4" width="1.6" height="1.6"/><rect x="1074.9" y="502.4" width="1.6" height="1.6"/><rect x="1074.9" y="760.4" width="1.6" height="1.6"/><rect x="1104.9" y="502.4" width="1.6" height="1.6"/><rect x="1104.9" y="760.4" width="1.6" height="1.6"/><rect x="1135.0" y="502.4" width="1.6" height="1.6"/><rect x="1135.0" y="760.4" width="1.6" height="1.6"/><rect x="1165.0" y="502.4" width="1.6" height="1.6"/><rect x="1165.0" y="760.4" width="1.6" height="1.6"/><rect x="1195.0" y="502.4" width="1.6" height="1.6"/><rect x="1195.0" y="760.4" width="1.6" height="1.6"/><rect x="1225.1" y="502.4" width="1.6" height="1.6"/><rect x="1225.1" y="760.4" width="1.6" height="1.6"/><rect x="1255.2" y="502.4" width="1.6" height="1.6"/><rect x="1255.2" y="760.4" width="1.6" height="1.6"/><rect x="1285.2" y="502.4" width="1.6" height="1.6"/><rect x="1285.2" y="760.4" width="1.6" height="1.6"/><rect x="1315.3" y="502.4" width="1.6" height="1.6"/><rect x="1315.3" y="760.4" width="1.6" height="1.6"/><rect x="1345.3" y="502.4" width="1.6" height="1.6"/><rect x="1345.3" y="760.4" width="1.6" height="1.6"/><rect x="1375.4" y="502.4" width="1.6" height="1.6"/><rect x="1375.4" y="760.4" width="1.6" height="1.6"/><rect x="1405.4" y="502.4" width="1.6" height="1.6"/><rect x="1405.4" y="760.4" width="1.6" height="1.6"/><rect x="1435.5" y="502.4" width="1.6" height="1.6"/><rect x="1435.5" y="760.4" width="1.6" height="1.6"/><rect x="1465.5" y="502.4" width="1.6" height="1.6"/><rect x="1465.5" y="760.4" width="1.6" height="1.6"/><rect x="1495.5" y="502.4" width="1.6" height="1.6"/><rect x="1495.5" y="760.4" width="1.6" height="1.6"/><rect x="1525.6" y="502.4" width="1.6" height="1.6"/><rect x="1525.6" y="760.4" width="1.6" height="1.6"/><rect x="1555.7" y="502.4" width="1.6" height="1.6"/><rect x="1555.7" y="760.4" width="1.6" height="1.6"/><rect x="1585.7" y="502.4" width="1.6" height="1.6"/><rect x="1585.7" y="760.4" width="1.6" height="1.6"/><rect x="1615.8" y="502.4" width="1.6" height="1.6"/><rect x="1615.8" y="760.4" width="1.6" height="1.6"/><rect x="1645.8" y="502.4" width="1.6" height="1.6"/><rect x="1645.8" y="760.4" width="1.6" height="1.6"/><rect x="1675.9" y="502.4" width="1.6" height="1.6"/><rect x="1675.9" y="760.4" width="1.6" height="1.6"/><rect x="1705.9" y="502.4" width="1.6" height="1.6"/><rect x="1705.9" y="760.4" width="1.6" height="1.6"/><rect x="1736.0" y="502.4" width="1.6" height="1.6"/><rect x="1736.0" y="760.4" width="1.6" height="1.6"/><rect x="1766.0" y="502.4" width="1.6" height="1.6"/><rect x="1766.0" y="760.4" width="1.6" height="1.6"/><rect x="1796.1" y="502.4" width="1.6" height="1.6"/><rect x="1796.1" y="760.4" width="1.6" height="1.6"/><rect x="1826.1" y="502.4" width="1.6" height="1.6"/><rect x="1826.1" y="760.4" width="1.6" height="1.6"/></g><path d="M857 506 H875 Q866.6 506.4 866.1 513 H865.1 Q864.6 506.4 857 506Z" fill="#000"/><path d="M857 758 H875 Q866.6 757.6 866.1 751 H865.1 Q864.6 757.6 857 758Z" fill="#000"/><rect x="610" y="248" width="7" height="252" fill="url(#lsh)"/><rect x="610" y="506" width="7" height="252" fill="url(#lsh)"/><text x="698" y="273.7" font-family="Liberation Sans" font-size="22" font-weight="normal" fill="#1e3b67" text-anchor="start" textLength="124.6" lengthAdjust="spacingAndGlyphs"  stroke="#1e3b67" stroke-width="0.15" stroke-linejoin="round">Ljud 2#03.4</text></svg>
<!-- track headers + ruler -->
<div style="position:absolute;left:0px;top:177px;width:610px;height:69px;background:#474747;"></div>
<div style="position:absolute;left:610px;top:177px;width:1218px;height:69px;background:#333333;"></div>
<div style="position:absolute;left:610px;top:208px;width:1218px;height:2px;background:#262626;"></div>
<div style="position:absolute;left:0px;top:246px;width:610px;height:256px;background:#7d7d7d;"></div>
<div style="position:absolute;left:0px;top:244px;width:610px;height:10px;background:linear-gradient(rgba(71,71,71,1),rgba(85,85,85,0.75) 35%,rgba(125,125,125,0));"></div>
<div style="position:absolute;left:0px;top:502px;width:610px;height:2px;background:#4a4a4a;"></div>
<div style="position:absolute;left:0px;top:504px;width:610px;height:256px;background:#595959;"></div>
<div style="position:absolute;left:0px;top:760px;width:610px;height:2px;background:#4b4b4b;"></div>
<div style="position:absolute;left:0px;top:762px;width:610px;height:315px;background:#595959;"></div>
<div style="position:absolute;left:0px;top:1076px;width:610px;height:2px;background:linear-gradient(#4a4a4a,#2b2b2b);"></div>
<div style="position:absolute;left:-10px;top:188px;width:56px;height:40.2px;background:#585858;border-radius:8px;box-shadow:0 1px 2px rgba(0,0,0,0.35);"></div>
<div style="position:absolute;left:523.8px;top:187.6px;width:66.3px;height:40.7px;background:#585858;border-radius:9px;box-shadow:0 1px 2px rgba(0,0,0,0.35);"></div>
<svg style="position:absolute;left:0;top:172px" width="1828" height="906" viewBox="0 172 1828 906"><path d="M2.2 207.9 H23.6 M12.9 197.1 V218.7" stroke="#efefef" stroke-width="3" stroke-linecap="round"/><path d="M550.9 195.9 H565.3 V202.2 L560.1 207.2 V219.8 Q560.1 221.4 558 221.4 Q555.8 221.4 555.8 219.8 V207.2 L550.9 202.2Z" fill="#ececec"/><path d="M541.3 204.9 L548 210.9 L541.3 216.9" fill="none" stroke="#ececec" stroke-width="2.4" stroke-linecap="square"/><path d="M574.6 204.9 L567.8 210.9 L574.6 216.9" fill="none" stroke="#ececec" stroke-width="2.4" stroke-linecap="square"/><path d="M622.9 214V246M653.0 214V246M715.0 214V246M745.1 214V246M775.1 214V246M805.2 214V246M835.2 214V246M865.3 214V246M895.4 214V246M955.5 214V246M985.5 214V246M1015.5 214V246M1045.6 214V246M1075.7 214V246M1105.7 214V246M1135.8 214V246M1195.8 214V246M1225.9 214V246M1256.0 214V246M1286.0 214V246M1316.1 214V246M1346.1 214V246M1376.2 214V246M1436.2 214V246M1466.3 214V246M1496.3 214V246M1526.4 214V246M1556.5 214V246M1586.5 214V246M1616.6 214V246M1676.7 214V246M1706.7 214V246M1736.8 214V246M1766.8 214V246M1796.9 214V246M1826.9 214V246" stroke="#686868" stroke-width="2"/><path d="M685.0 177.5V246M925.4 177.5V246M1165.8 177.5V246M1406.2 177.5V246M1646.6 177.5V246" stroke="#6e6e6e" stroke-width="2"/><path d="M697.90 177.50H701.20V196.10H697.90V181.06L693.00 185.20V181.96Z" fill="#dedede"/><text x="704.1" y="196.1" font-family="Liberation Sans" font-size="26" font-weight="normal" fill="#dedede" text-anchor="start" textLength="15.5" lengthAdjust="spacingAndGlyphs"  stroke="#dedede" stroke-width="0.85" stroke-linejoin="round">6</text><path d="M726.00 177.50H729.30V196.10H726.00V181.06L721.10 185.20V181.96Z" fill="#dedede"/><path d="M938.30 177.50H941.60V196.10H938.30V181.06L933.40 185.20V181.96Z" fill="#dedede"/><text x="944.1" y="196.1" font-family="Liberation Sans" font-size="26" font-weight="normal" fill="#dedede" text-anchor="start" textLength="31.5" lengthAdjust="spacingAndGlyphs"  stroke="#dedede" stroke-width="0.85" stroke-linejoin="round">69</text><path d="M1178.70 177.50H1182.00V196.10H1178.70V181.06L1173.80 185.20V181.96Z" fill="#dedede"/><text x="1184.5" y="196.1" font-family="Liberation Sans" font-size="26" font-weight="normal" fill="#dedede" text-anchor="start" textLength="31.5" lengthAdjust="spacingAndGlyphs"  stroke="#dedede" stroke-width="0.85" stroke-linejoin="round">77</text><path d="M1419.10 177.50H1422.40V196.10H1419.10V181.06L1414.20 185.20V181.96Z" fill="#dedede"/><text x="1424.9" y="196.1" font-family="Liberation Sans" font-size="26" font-weight="normal" fill="#dedede" text-anchor="start" textLength="31.5" lengthAdjust="spacingAndGlyphs"  stroke="#dedede" stroke-width="0.85" stroke-linejoin="round">85</text><path d="M1659.50 177.50H1662.80V196.10H1659.50V181.06L1654.60 185.20V181.96Z" fill="#dedede"/><text x="1665.3" y="196.1" font-family="Liberation Sans" font-size="26" font-weight="normal" fill="#dedede" text-anchor="start" textLength="31.5" lengthAdjust="spacingAndGlyphs"  stroke="#dedede" stroke-width="0.85" stroke-linejoin="round">93</text><text x="60" y="353.9" font-family="Liberation Sans" font-size="26.5" font-weight="normal" fill="#ffffff" text-anchor="start" textLength="74" lengthAdjust="spacingAndGlyphs"  stroke="#ffffff" stroke-width="0.55" stroke-linejoin="round">Ljud 2</text><text x="59.3" y="611.9" font-family="Liberation Sans" font-size="26.5" font-weight="normal" fill="#ffffff" text-anchor="start" textLength="327" lengthAdjust="spacingAndGlyphs"  stroke="#ffffff" stroke-width="0.55" stroke-linejoin="round">I let our worlds collide beat</text><defs><linearGradient id="ib0" x1="0" y1="0" x2="0" y2="1"><stop offset="0" stop-color="#2b3850"/><stop offset="0.5" stop-color="#33445c"/><stop offset="1" stop-color="#27344a"/></linearGradient></defs><rect x="-4" y="354.2" width="46" height="43.3" rx="3.5" fill="url(#ib0)" stroke="#1f2735" stroke-width="1"/><rect x="1.1" y="367.0" width="2.1" height="18" fill="#6db7ff"/><rect x="4.9" y="371.5" width="2.1" height="9" fill="#6db7ff"/><rect x="9" y="367.0" width="2.1" height="18" fill="#6db7ff"/><rect x="13" y="361.0" width="2.1" height="30" fill="#6db7ff"/><rect x="17" y="367.0" width="2.1" height="18" fill="#6db7ff"/><rect x="21" y="371.25" width="2.1" height="9.5" fill="#6db7ff"/><rect x="25" y="368.5" width="2.1" height="15" fill="#6db7ff"/><rect x="29" y="371.5" width="2.1" height="9" fill="#6db7ff"/><rect x="33" y="374.0" width="2.1" height="4" fill="#6db7ff"/><rect x="62" y="386.7" width="82.2" height="32.5" rx="5.5" fill="rgba(0,0,0,0.22)"/><rect x="62" y="385.7" width="82.2" height="32.3" rx="5.5" fill="#8b8b8b"/><rect x="102.2" y="385.7" width="1.2" height="32.3" fill="rgba(0,0,0,0.28)"/><rect x="155.7" y="386.7" width="40.2" height="32.5" rx="5.5" fill="rgba(0,0,0,0.22)"/><rect x="155.7" y="385.7" width="40.2" height="32.3" rx="5.5" fill="#8b8b8b"/><path d="M74.8 397.5 H79 L88.6 392.29999999999995 V411.5 L79 406.29999999999995 H74.8Z" fill="#ececec"/><path d="M72.6 391.5 L94.4 413.09999999999997" stroke="#8b8b8b" stroke-width="5.2"/><path d="M73.6 392.7 L93.4 412.29999999999995" stroke="#ececec" stroke-width="1.9" stroke-linecap="round"/><path d="M114 407.9 V402.9 A10.4 10.6 0 0 1 134.8 402.9 V407.9" fill="none" stroke="#ececec" stroke-width="2.2"/><rect x="115.6" y="403.5" width="5.2" height="9.4" rx="1.4" fill="#ececec"/><rect x="128" y="403.5" width="5.2" height="9.4" rx="1.4" fill="#ececec"/><circle cx="176.9" cy="396.7" r="5.3" fill="#ececec"/><path d="M170.6 403.5 Q176.9 407.5 183.2 403.5" fill="none" stroke="#ececec" stroke-width="2.1" stroke-linecap="round"/><path d="M166.6 407.5 Q176.9 414.29999999999995 187.2 407.5" fill="none" stroke="#ececec" stroke-width="2.1" stroke-linecap="round"/><rect x="253.8" y="383.7" width="256.4" height="36.4" rx="18.2" fill="#444444"/><rect x="270" y="393.8" width="44.3" height="6.3" rx="3.1" fill="#7bd672"/><rect x="290" y="393.8" width="24.3" height="6.3" fill="#7bd672"/><rect x="321.6" y="394.1" width="2.4" height="5.7" fill="#7bd672"/><rect x="270" y="403.9" width="44.3" height="6.3" rx="3.1" fill="#7bd672"/><rect x="290" y="403.9" width="24.3" height="6.3" fill="#7bd672"/><rect x="321.6" y="404.2" width="2.4" height="5.7" fill="#7bd672"/><circle cx="446.1" cy="401.9" r="16.1" fill="#b0b0b0"/><path d="M550.18 420.67 A21.2 21.2 0 1 1 572.02 420.67" fill="none" stroke="#444444" stroke-width="7.8"/><circle cx="561.1" cy="402.5" r="17.2" fill="#a9a9a9"/><rect x="560.1" y="381.7" width="2" height="4.4" fill="#6fd466"/><rect x="560.0" y="388.1" width="2.2" height="5.6" fill="#161616"/><defs><linearGradient id="ib258" x1="0" y1="0" x2="0" y2="1"><stop offset="0" stop-color="#2b3850"/><stop offset="0.5" stop-color="#33445c"/><stop offset="1" stop-color="#27344a"/></linearGradient></defs><rect x="-4" y="612.2" width="46" height="43.3" rx="3.5" fill="url(#ib258)" stroke="#1f2735" stroke-width="1"/><rect x="1.1" y="625.0" width="2.1" height="18" fill="#6db7ff"/><rect x="4.9" y="629.5" width="2.1" height="9" fill="#6db7ff"/><rect x="9" y="625.0" width="2.1" height="18" fill="#6db7ff"/><rect x="13" y="619.0" width="2.1" height="30" fill="#6db7ff"/><rect x="17" y="625.0" width="2.1" height="18" fill="#6db7ff"/><rect x="21" y="629.25" width="2.1" height="9.5" fill="#6db7ff"/><rect x="25" y="626.5" width="2.1" height="15" fill="#6db7ff"/><rect x="29" y="629.5" width="2.1" height="9" fill="#6db7ff"/><rect x="33" y="632.0" width="2.1" height="4" fill="#6db7ff"/><rect x="62" y="644.7" width="82.2" height="32.5" rx="5.5" fill="rgba(0,0,0,0.22)"/><rect x="62" y="643.7" width="82.2" height="32.3" rx="5.5" fill="#6a6a6a"/><rect x="102.2" y="643.7" width="1.2" height="32.3" fill="rgba(0,0,0,0.28)"/><rect x="155.7" y="644.7" width="40.2" height="32.5" rx="5.5" fill="rgba(0,0,0,0.22)"/><rect x="155.7" y="643.7" width="40.2" height="32.3" rx="5.5" fill="#6a6a6a"/><path d="M74.8 655.5 H79 L88.6 650.3 V669.5 L79 664.3 H74.8Z" fill="#ececec"/><path d="M72.6 649.5 L94.4 671.1" stroke="#6a6a6a" stroke-width="5.2"/><path d="M73.6 650.6999999999999 L93.4 670.3" stroke="#ececec" stroke-width="1.9" stroke-linecap="round"/><path d="M114 665.9 V660.9 A10.4 10.6 0 0 1 134.8 660.9 V665.9" fill="none" stroke="#ececec" stroke-width="2.2"/><rect x="115.6" y="661.5" width="5.2" height="9.4" rx="1.4" fill="#ececec"/><rect x="128" y="661.5" width="5.2" height="9.4" rx="1.4" fill="#ececec"/><circle cx="176.9" cy="654.6999999999999" r="5.3" fill="#ececec"/><path d="M170.6 661.5 Q176.9 665.5 183.2 661.5" fill="none" stroke="#ececec" stroke-width="2.1" stroke-linecap="round"/><path d="M166.6 665.5 Q176.9 672.3 187.2 665.5" fill="none" stroke="#ececec" stroke-width="2.1" stroke-linecap="round"/><rect x="253.8" y="641.7" width="256.4" height="36.4" rx="18.2" fill="#3b3b3b"/><circle cx="301.5" cy="659.9" r="16.1" fill="#a3a3a3"/><path d="M550.18 678.67 A21.2 21.2 0 1 1 572.02 678.67" fill="none" stroke="#3d3d3d" stroke-width="7.8"/><circle cx="561.1" cy="660.5" r="17.2" fill="#8c8c8c"/><rect x="560.1" y="639.7" width="2" height="4.4" fill="#6fd466"/><rect x="560.0" y="646.1" width="2.2" height="5.6" fill="#161616"/></svg>
<!-- control bar -->
<div style="position:absolute;left:0px;top:0px;width:1828px;height:172px;background:#a7a8a7;"></div>
<div style="position:absolute;left:0px;top:170px;width:1828px;height:2px;background:linear-gradient(#8a8a8a,#5c5c5c);"></div>
<div style="position:absolute;left:0px;top:172px;width:1828px;height:4px;background:#8dbdf8;"></div>
<div style="position:absolute;left:0px;top:176px;width:1828px;height:1px;background:#232323;"></div>
<div style="position:absolute;left:1711.5px;top:83px;width:140px;height:38px;background:#3a3a3a;border-radius:19px;"></div>
<div style="position:absolute;left:680px;top:54px;width:528.5px;height:95.5px;background:#23252f;border-radius:13px;"></div>
<div style="position:absolute;left:919px;top:56px;width:1px;height:92px;background:#32353f;"></div>
<div style="position:absolute;left:1047px;top:56px;width:1px;height:92px;background:#32353f;"></div>
<div style="position:absolute;left:1175px;top:56px;width:1px;height:92px;background:#32353f;"></div>
<svg style="position:absolute;left:0;top:0" width="1828" height="172" viewBox="0 0 1828 172"><defs><radialGradient id="gtr" cx="0.42" cy="0.55" r="0.6"><stop offset="0" stop-color="#fff47e"/><stop offset="0.45" stop-color="#f7b23a"/><stop offset="0.8" stop-color="#e0661c"/><stop offset="1" stop-color="#7a2a10"/></radialGradient><filter id="dsh" x="-20%" y="-20%" width="140%" height="150%"><feGaussianBlur stdDeviation="0.9"/></filter></defs><g><path d="M703.6 10.4 H717.3 L726 18.6 V37 Q726 38.6 724.4 38.6 H703.6 Q702 38.6 702 37 V12 Q702 10.4 703.6 10.4Z" fill="rgba(0,0,0,0.32)" filter="url(#dsh)"/><path d="M703.6 9.9 H717.3 L726.1 18.2 V36.7 Q726.1 38.3 724.5 38.3 H703.6 Q702 38.3 702 36.7 V11.5 Q702 9.9 703.6 9.9Z" fill="#f5f5f5"/><path d="M717.3 9.9 L726.1 18.2 H719 Q717.3 18.2 717.3 16.5Z" fill="#dedede"/><path d="M717.3 9.9 L726.1 18.2" stroke="#c4c4c4" stroke-width="0.5"/><rect x="706" y="16.8" width="14.1" height="14.5" rx="3.3" fill="#2a2a2d"/><path d="M713.6 24.6 L717.5 16.2" stroke="#c8a46c" stroke-width="1.2" stroke-linecap="round"/><ellipse cx="712.7" cy="26.4" rx="3.7" ry="3.3" transform="rotate(-35 712.7 26.4)" fill="url(#gtr)"/><circle cx="716.3" cy="24.2" r="0.8" fill="#b33a2a"/></g><text x="737.6" y="34" font-family="Liberation Sans" font-size="25" font-weight="bold" fill="#3b3b3b" text-anchor="start" textLength="447" lengthAdjust="spacingAndGlyphs" >Sunda och behövande sidan - Spår</text><path d="M225.59999999999997 101.6 L243.8 91.1 V112.1Z" fill="#4b4b4b" stroke="#4b4b4b" stroke-width="4.4" stroke-linejoin="round"/><path d="M247.59999999999997 101.6 L266.8 91.1 V112.1Z" fill="#4b4b4b" stroke="#4b4b4b" stroke-width="4.4" stroke-linejoin="round"/><path d="M345.0 101.6 L326.59999999999997 91.1 V112.1Z" fill="#4b4b4b" stroke="#4b4b4b" stroke-width="4.4" stroke-linejoin="round"/><path d="M322.8 101.6 L303.59999999999997 91.1 V112.1Z" fill="#4b4b4b" stroke="#4b4b4b" stroke-width="4.4" stroke-linejoin="round"/><rect x="379.2" y="88.2" width="8.3" height="26.8" rx="2.2" fill="#4b4b4b"/><path d="M390.4 101.6 L408.8 91.0 V112.19999999999999Z" fill="#4b4b4b" stroke="#4b4b4b" stroke-width="4.4" stroke-linejoin="round"/><path d="M482.40000000000003 101.8 L461.4 90.8 V112.8Z" fill="#4b4b4b" stroke="#4b4b4b" stroke-width="4.4" stroke-linejoin="round"/><circle cx="544" cy="101.8" r="15.9" fill="#b93f33"/><g fill="none" stroke="#4b4b4b" stroke-width="3.5" stroke-linecap="round" stroke-linejoin="round"><path d="M601.6 101.2 V98.9 Q601.6 93.7 606.8 93.7 H621"/><path d="M633.6 102 V104.7 Q633.6 109.9 628.4 109.9 H614.5"/></g><g fill="#4b4b4b" stroke="#4b4b4b" stroke-width="2" stroke-linejoin="round"><path d="M621.4 88.8 L628 93.7 L621.4 98.7Z"/><path d="M613.9 105 L607.4 110 L613.9 115.2Z"/></g><g style="paint-order:fill stroke" stroke="#23252f" stroke-width="0.5"><text x="717.9" y="118.2" font-family="Liberation Sans" font-size="60.4" font-weight="normal" fill="#c7d7ee" text-anchor="start" textLength="123.5" lengthAdjust="spacingAndGlyphs" >404.</text></g><path d="M865.50 76.20H869.90V118.20H865.50V80.95L853.80 88.91V84.60Z" fill="#c7d7ee"/><path d="M960.30 90.90H963.70V118.00H960.30V94.57L952.70 102.36V99.03Z" fill="#c7d7ee"/><text x="967.8" y="118" font-family="Liberation Sans" font-size="39" font-weight="normal" fill="#c7d7ee" text-anchor="start" textLength="51" lengthAdjust="spacingAndGlyphs" >20</text><text x="748.3" y="141.8" font-family="Liberation Sans" font-size="15.8" font-weight="normal" fill="#6f7a8e" text-anchor="start" textLength="41.2" lengthAdjust="spacingAndGlyphs"  stroke="#6f7a8e" stroke-width="0.55" stroke-linejoin="round">TAKT</text><text x="840.4" y="141.8" font-family="Liberation Sans" font-size="15.8" font-weight="normal" fill="#6f7a8e" text-anchor="start" textLength="42.6" lengthAdjust="spacingAndGlyphs"  stroke="#6f7a8e" stroke-width="0.55" stroke-linejoin="round">SLAG</text><text x="954.6" y="141.8" font-family="Liberation Sans" font-size="15.8" font-weight="normal" fill="#6f7a8e" text-anchor="start" textLength="56.8" lengthAdjust="spacingAndGlyphs"  stroke="#6f7a8e" stroke-width="0.55" stroke-linejoin="round">TEMPO</text><text x="1090.5" y="90" font-family="Liberation Sans" font-size="23.5" font-weight="bold" fill="#c7d7ee" text-anchor="start" textLength="40" lengthAdjust="spacingAndGlyphs" >4/4</text><text x="1079" y="129.8" font-family="Liberation Sans" font-size="25" font-weight="bold" fill="#c7d7ee" text-anchor="start" textLength="64" lengthAdjust="spacingAndGlyphs" >C-dur</text><path d="M1183.6 100.6 L1192 108.6 L1200.4 100.6" fill="none" stroke="#c7d7ee" stroke-width="2.6" stroke-linecap="round" stroke-linejoin="round"/><g fill="none" stroke="#4b4b4b" stroke-width="2.9" stroke-linecap="round" stroke-linejoin="round"><path d="M1252 116.5 L1260 108.5"/><path d="M1274.4 85.7 L1259.9 100.4 V108.3"/><path d="M1260.2 108.6 L1268.2 109 L1282.8 94.5"/></g><circle cx="1251.9" cy="116.6" r="2.95" fill="#4b4b4b"/><path d="M1358.80 97.20H1361.30V107.60H1358.80V99.90L1355.90 101.94V99.49Z" fill="#4b4b4b"/><text x="1362.9" y="108.5" font-family="Liberation Sans" font-size="19" font-weight="normal" fill="#4b4b4b" text-anchor="start" textLength="11" lengthAdjust="spacingAndGlyphs"  stroke="#4b4b4b" stroke-width="1.0" stroke-linejoin="round">2</text><text x="1375.2" y="110.5" font-family="Liberation Sans" font-size="25" font-weight="normal" fill="#4b4b4b" text-anchor="start" textLength="14.8" lengthAdjust="spacingAndGlyphs"  stroke="#4b4b4b" stroke-width="0.7" stroke-linejoin="round">3</text><text x="1390.0" y="112.9" font-family="Liberation Sans" font-size="30.3" font-weight="normal" fill="#4b4b4b" text-anchor="start" textLength="18.2" lengthAdjust="spacingAndGlyphs"  stroke="#4b4b4b" stroke-width="0.3" stroke-linejoin="round">4</text><g fill="none" stroke="#4b4b4b" stroke-width="2.7" stroke-linecap="round" stroke-linejoin="round"><path d="M1447 89 Q1448.8 85.7 1450.6 89 L1463.2 113.5 Q1464.6 116.3 1461.6 116.3 H1436 Q1433 116.3 1434.4 113.5Z"/><path d="M1437.8 108.3 H1460.8"/><path d="M1448.8 93.4 V103.4"/></g><path d="M1454 102.9 L1462.2 94.9" fill="none" stroke="#a7a8a7" stroke-width="6.4"/><path d="M1449.3 107.5 L1463.4 93.8" fill="none" stroke="#4b4b4b" stroke-width="2.7" stroke-linecap="round"/></svg>
<!-- smart controls -->
<div style="position:absolute;left:0px;top:1078px;width:1828px;height:4px;background:#8dbdf8;"></div>
<div style="position:absolute;left:0px;top:1082px;width:1828px;height:4px;background:#000;"></div>
<div style="position:absolute;left:0px;top:1086px;width:1828px;height:75px;background:#474747;"></div>
<div style="position:absolute;left:0px;top:1160px;width:610px;height:276px;background:#595959;"></div>
<div style="position:absolute;left:0px;top:1160px;width:610px;height:8px;background:linear-gradient(rgba(40,40,40,0.85),rgba(60,60,60,0.3) 30%,rgba(89,89,89,0));"></div>
<div style="position:absolute;left:610px;top:1160px;width:188px;height:276px;background:#2e2e2e;"></div>
<div style="position:absolute;left:798px;top:1160px;width:1030px;height:276px;background:linear-gradient(179deg,#4e729f 0%,#466a96 25%,#3e608b 50%,#36557d 75%,#2f4c70 100%);"></div>
<div style="position:absolute;left:610px;top:1160px;width:1218px;height:7px;background:linear-gradient(rgba(20,20,20,0.55),rgba(30,30,30,0));"></div>
<div style="position:absolute;left:-10px;top:1099.8px;width:290px;height:44px;background:#3b3b3b;border-radius:9px;"></div>
<div style="position:absolute;left:-10px;top:1102px;width:138.3px;height:39.8px;background:#3c6cb4;border-radius:9px;box-shadow:0 1px 2px rgba(0,0,0,0.4);"></div>
<div style="position:absolute;left:295.7px;top:1102px;width:146.4px;height:39.8px;background:#3c6cb4;border-radius:9px;box-shadow:0 1px 2px rgba(0,0,0,0.4);"></div>
<div style="position:absolute;left:982px;top:1099.8px;width:380px;height:44px;background:#3b3b3b;border-radius:9px;"></div>
<div style="position:absolute;left:984px;top:1102.2px;width:186px;height:39.8px;background:#3c6cb4;border-radius:9px;box-shadow:0 1px 2px rgba(0,0,0,0.4);"></div>
<div style="position:absolute;left:178.2px;top:1250.2px;width:390px;height:8px;background:#474747;border-radius:4px;"></div>
<div style="position:absolute;left:461.7px;top:1234px;width:40px;height:40px;background:#a9a9a9;border-radius:20px;box-shadow:0 1px 2px rgba(0,0,0,0.3);"></div>
<div style="position:absolute;left:177px;top:1297.4px;width:26.5px;height:26.2px;background:#6b6b6b;border-radius:6px;"></div>
<div style="position:absolute;left:175.7px;top:1344.3px;width:66.8px;height:39.7px;background:#676767;border-radius:9px;box-shadow:0 1px 2px rgba(0,0,0,0.3);"></div>
<div style="position:absolute;left:257.8px;top:1344.3px;width:312.8px;height:39.7px;background:#676767;border-radius:9px;box-shadow:0 1px 2px rgba(0,0,0,0.3);"></div>
<div style="position:absolute;left:175.7px;top:1399.9px;width:66.8px;height:50px;background:#676767;border-radius:9px;box-shadow:0 1px 2px rgba(0,0,0,0.3);"></div>
<svg style="position:absolute;left:0;top:1086px" width="1828" height="350" viewBox="0 1086 1828 350"><defs><radialGradient id="kg" cx="0.5" cy="0.3" r="0.75"><stop offset="0" stop-color="#1b1b1c"/><stop offset="0.7" stop-color="#101011"/><stop offset="1" stop-color="#0a0a0b"/></radialGradient><radialGradient id="led" cx="0.5" cy="0.5" r="0.5"><stop offset="0" stop-color="#000004"/><stop offset="0.72" stop-color="#03040c"/><stop offset="0.9" stop-color="#0a1128"/><stop offset="1" stop-color="#16233f"/></radialGradient><filter id="ksh" x="-20%" y="-20%" width="140%" height="140%"><feGaussianBlur stdDeviation="2.6"/></filter></defs><text x="28" y="1131.7" font-family="Liberation Sans" font-size="26.5" font-weight="normal" fill="#fff" text-anchor="start" textLength="56.5" lengthAdjust="spacingAndGlyphs"  stroke="#fff" stroke-width="0.58" stroke-linejoin="round">Spår</text><text x="164.8" y="1131.7" font-family="Liberation Sans" font-size="26.5" font-weight="normal" fill="#fff" text-anchor="start" textLength="85.5" lengthAdjust="spacingAndGlyphs"  stroke="#fff" stroke-width="0.58" stroke-linejoin="round">Master</text><text x="326.6" y="1131.7" font-family="Liberation Sans" font-size="26.5" font-weight="normal" fill="#fff" text-anchor="start" textLength="84.3" lengthAdjust="spacingAndGlyphs"  stroke="#fff" stroke-width="0.58" stroke-linejoin="round">Jämför</text><text x="1028.8" y="1131.7" font-family="Liberation Sans" font-size="26.5" font-weight="normal" fill="#fff" text-anchor="start" textLength="99" lengthAdjust="spacingAndGlyphs"  stroke="#fff" stroke-width="0.58" stroke-linejoin="round">Reglage</text><text x="1250.8" y="1131.7" font-family="Liberation Sans" font-size="26.5" font-weight="normal" fill="#fff" text-anchor="start" textLength="36" lengthAdjust="spacingAndGlyphs"  stroke="#fff" stroke-width="0.58" stroke-linejoin="round">EQ</text><text x="-1" y="1207.3" font-family="Liberation Sans" font-size="26.5" font-weight="normal" fill="#fff" text-anchor="start" textLength="280.5" lengthAdjust="spacingAndGlyphs"  stroke="#fff" stroke-width="0.6" stroke-linejoin="round">Inspelningsinställningar</text><text x="167" y="1265.3" font-family="Liberation Sans" font-size="26.5" font-weight="normal" fill="#bcbcbc" text-anchor="end" textLength="190" lengthAdjust="spacingAndGlyphs"  stroke="#bcbcbc" stroke-width="0.4" stroke-linejoin="round">Inspelningsnivå:</text><text x="215" y="1320.5" font-family="Liberation Sans" font-size="26.5" font-weight="normal" fill="#dedede" text-anchor="start" textLength="282" lengthAdjust="spacingAndGlyphs"  stroke="#dedede" stroke-width="0.4" stroke-linejoin="round">Automatisk nivåkontroll</text><text x="37" y="1372" font-family="Liberation Sans" font-size="26.5" font-weight="normal" fill="#b4b4b4" text-anchor="start" textLength="130.3" lengthAdjust="spacingAndGlyphs"  stroke="#b4b4b4" stroke-width="0.4" stroke-linejoin="round">Inmatning:</text><text x="11.2" y="1428" font-family="Liberation Sans" font-size="26.5" font-weight="normal" fill="#b4b4b4" text-anchor="start" textLength="156.2" lengthAdjust="spacingAndGlyphs"  stroke="#b4b4b4" stroke-width="0.4" stroke-linejoin="round">Medhörning:</text><text x="272" y="1374" font-family="Liberation Sans" font-size="26.5" font-weight="normal" fill="#f2f2f2" text-anchor="start" textLength="150.5" lengthAdjust="spacingAndGlyphs"  stroke="#f2f2f2" stroke-width="0.4" stroke-linejoin="round">1  (MacBook</text><path d="M533.6 1192.6 L544 1203 L554.4 1192.6" fill="none" stroke="#e4e4e4" stroke-width="2.6" stroke-linecap="round" stroke-linejoin="round"/><circle cx="209" cy="1362.6" r="8.6" fill="none" stroke="#ededed" stroke-width="2.2"/><path d="M543.6 1360.2 L550 1354.2 L556.4 1360.2 M543.6 1368.6 L550 1374.6 L556.4 1368.6" fill="none" stroke="#d8d8d8" stroke-width="2.4" stroke-linecap="round" stroke-linejoin="round"/><circle cx="209" cy="1416" r="5.3" fill="#ececec"/><path d="M202.7 1422.8 Q209 1426.8 215.3 1422.8" fill="none" stroke="#ececec" stroke-width="2.1" stroke-linecap="round"/><path d="M198.7 1426.8 Q209 1433.6 219.3 1426.8" fill="none" stroke="#ececec" stroke-width="2.1" stroke-linecap="round"/><text x="1017.9" y="1208.4" font-family="Liberation Sans" font-size="28.2" font-weight="normal" fill="#f4f6fa" text-anchor="start" textLength="15.1" lengthAdjust="spacingAndGlyphs"  stroke="#f4f6fa" stroke-width="0.35" stroke-linejoin="round">C</text><text x="1034.4" y="1208.4" font-family="Liberation Sans" font-size="28.2" font-weight="normal" fill="#f4f6fa" text-anchor="start" textLength="15.1" lengthAdjust="spacingAndGlyphs"  stroke="#f4f6fa" stroke-width="0.35" stroke-linejoin="round">O</text><text x="1050.5" y="1208.4" font-family="Liberation Sans" font-size="28.2" font-weight="normal" fill="#f4f6fa" text-anchor="start" textLength="15.9" lengthAdjust="spacingAndGlyphs"  stroke="#f4f6fa" stroke-width="0.35" stroke-linejoin="round">M</text><text x="1067.1" y="1208.4" font-family="Liberation Sans" font-size="28.2" font-weight="normal" fill="#f4f6fa" text-anchor="start" textLength="15.7" lengthAdjust="spacingAndGlyphs"  stroke="#f4f6fa" stroke-width="0.35" stroke-linejoin="round">P</text><text x="1083.6" y="1208.4" font-family="Liberation Sans" font-size="28.2" font-weight="normal" fill="#f4f6fa" text-anchor="start" textLength="15.7" lengthAdjust="spacingAndGlyphs"  stroke="#f4f6fa" stroke-width="0.35" stroke-linejoin="round">R</text><text x="1100.25" y="1208.4" font-family="Liberation Sans" font-size="28.2" font-weight="normal" fill="#f4f6fa" text-anchor="start" textLength="15.4" lengthAdjust="spacingAndGlyphs"  stroke="#f4f6fa" stroke-width="0.35" stroke-linejoin="round">E</text><text x="1116.9" y="1208.4" font-family="Liberation Sans" font-size="28.2" font-weight="normal" fill="#f4f6fa" text-anchor="start" textLength="15.1" lengthAdjust="spacingAndGlyphs"  stroke="#f4f6fa" stroke-width="0.35" stroke-linejoin="round">S</text><text x="1133.4" y="1208.4" font-family="Liberation Sans" font-size="28.2" font-weight="normal" fill="#f4f6fa" text-anchor="start" textLength="15.1" lengthAdjust="spacingAndGlyphs"  stroke="#f4f6fa" stroke-width="0.35" stroke-linejoin="round">S</text><text x="1149.9" y="1208.4" font-family="Liberation Sans" font-size="28.2" font-weight="normal" fill="#f4f6fa" text-anchor="start" textLength="15.1" lengthAdjust="spacingAndGlyphs"  stroke="#f4f6fa" stroke-width="0.35" stroke-linejoin="round">O</text><text x="1166.1" y="1208.4" font-family="Liberation Sans" font-size="28.2" font-weight="normal" fill="#f4f6fa" text-anchor="start" textLength="15.7" lengthAdjust="spacingAndGlyphs"  stroke="#f4f6fa" stroke-width="0.35" stroke-linejoin="round">R</text><text x="1516.15" y="1208.4" font-family="Liberation Sans" font-size="28.2" font-weight="normal" fill="#f4f6fa" text-anchor="start" textLength="15.4" lengthAdjust="spacingAndGlyphs"  stroke="#f4f6fa" stroke-width="0.35" stroke-linejoin="round">E</text><text x="1532.8" y="1208.4" font-family="Liberation Sans" font-size="28.2" font-weight="normal" fill="#f4f6fa" text-anchor="start" textLength="15.1" lengthAdjust="spacingAndGlyphs"  stroke="#f4f6fa" stroke-width="0.35" stroke-linejoin="round">Q</text><rect x="979.5" y="1227" width="236.5" height="230" rx="6" fill="none" stroke="#aebdd3" stroke-width="1.6"/><rect x="1242.6" y="1227" width="578.8" height="230" rx="6" fill="none" stroke="#aebdd3" stroke-width="1.6"/><text x="1036.7" y="1254.9" font-family="Liberation Sans" font-size="18" font-weight="normal" fill="#e9eef6" text-anchor="start" textLength="79" lengthAdjust="spacingAndGlyphs" >AMOUNT</text><text x="1318.8" y="1254.9" font-family="Liberation Sans" font-size="18" font-weight="normal" fill="#e9eef6" text-anchor="start" textLength="39" lengthAdjust="spacingAndGlyphs" >LOW</text><text x="1513.2" y="1254.9" font-family="Liberation Sans" font-size="18" font-weight="normal" fill="#e9eef6" text-anchor="start" textLength="35.5" lengthAdjust="spacingAndGlyphs" >MID</text><text x="1700.5" y="1254.9" font-family="Liberation Sans" font-size="18" font-weight="normal" fill="#e9eef6" text-anchor="start" textLength="46.5" lengthAdjust="spacingAndGlyphs" >HIGH</text><text x="1488.5" y="1433.2" font-family="Liberation Sans" font-size="18" font-weight="normal" fill="#e9eef6" text-anchor="start" textLength="86" lengthAdjust="spacingAndGlyphs" >MID FREQ</text><text x="1682.2" y="1433.2" font-family="Liberation Sans" font-size="18" font-weight="normal" fill="#e9eef6" text-anchor="start" textLength="82" lengthAdjust="spacingAndGlyphs" >LOW CUT</text><defs><clipPath id="kca"><circle cx="1075.7" cy="1332" r="55.0" transform="rotate(45 1075.7 1332)"/></clipPath></defs><path d="M1046.4 1382.7L1041.7 1390.9M1025.0 1361.3L1016.8 1366.0M1017.1 1332.0L1007.7 1332.0M1025.0 1302.7L1016.8 1298.0M1046.4 1281.3L1041.7 1273.1M1075.7 1273.4L1075.7 1264.0M1105.0 1281.3L1109.7 1273.1M1126.4 1302.7L1134.6 1298.0M1134.3 1332.0L1143.7 1332.0M1126.4 1361.3L1134.6 1366.0M1105.0 1382.7L1109.7 1390.9" stroke="#c9d3e2" stroke-width="1.5" fill="none"/><ellipse cx="1075.7" cy="1335.5" rx="55.8" ry="55.3" fill="rgba(5,12,28,0.6)" filter="url(#ksh)"/><circle cx="1075.7" cy="1332" r="55.3" fill="url(#kg)"/><g transform="rotate(-45 1075.7 1332)" clip-path="url(#kca)"><rect x="1054.7" y="1274.7" width="42" height="114.6" fill="#1d1d1e"/><rect x="1053.2" y="1274.7" width="3" height="114.6" fill="#040404"/><rect x="1095.2" y="1274.7" width="3.4" height="114.6" fill="#030303"/><rect x="1056.2" y="1274.7" width="2" height="114.6" fill="#262627"/><rect x="1074.7" y="1277.5" width="2" height="41" fill="#d4d4d4"/></g><defs><clipPath id="kcb"><circle cx="1338.9" cy="1332" r="55.0" transform="rotate(-44 1338.9 1332)"/></clipPath></defs><path d="M1309.6 1382.7L1304.9 1390.9M1288.2 1361.3L1280.0 1366.0M1280.3 1332.0L1270.9 1332.0M1288.2 1302.7L1280.0 1298.0M1309.6 1281.3L1304.9 1273.1M1338.9 1273.4L1338.9 1264.0M1368.2 1281.3L1372.9 1273.1M1389.6 1302.7L1397.8 1298.0M1397.5 1332.0L1406.9 1332.0M1389.6 1361.3L1397.8 1366.0M1368.2 1382.7L1372.9 1390.9" stroke="#c9d3e2" stroke-width="1.5" fill="none"/><ellipse cx="1338.9" cy="1335.5" rx="55.8" ry="55.3" fill="rgba(5,12,28,0.6)" filter="url(#ksh)"/><circle cx="1338.9" cy="1332" r="55.3" fill="url(#kg)"/><g transform="rotate(44 1338.9 1332)" clip-path="url(#kcb)"><rect x="1317.9" y="1274.7" width="42" height="114.6" fill="#1d1d1e"/><rect x="1316.4" y="1274.7" width="3" height="114.6" fill="#040404"/><rect x="1358.4" y="1274.7" width="3.4" height="114.6" fill="#030303"/><rect x="1319.4" y="1274.7" width="2" height="114.6" fill="#262627"/><rect x="1337.9" y="1277.5" width="2" height="41" fill="#d4d4d4"/></g><defs><clipPath id="kcc"><circle cx="1531.3" cy="1332" r="55.0" transform="rotate(57 1531.3 1332)"/></clipPath></defs><path d="M1502.0 1382.7L1497.3 1390.9M1480.6 1361.3L1472.4 1366.0M1472.7 1332.0L1463.3 1332.0M1480.6 1302.7L1472.4 1298.0M1502.0 1281.3L1497.3 1273.1M1531.3 1273.4L1531.3 1264.0M1560.6 1281.3L1565.3 1273.1M1582.0 1302.7L1590.2 1298.0M1589.9 1332.0L1599.3 1332.0M1582.0 1361.3L1590.2 1366.0M1560.6 1382.7L1565.3 1390.9" stroke="#c9d3e2" stroke-width="1.5" fill="none"/><ellipse cx="1531.3" cy="1335.5" rx="55.8" ry="55.3" fill="rgba(5,12,28,0.6)" filter="url(#ksh)"/><circle cx="1531.3" cy="1332" r="55.3" fill="url(#kg)"/><g transform="rotate(-57 1531.3 1332)" clip-path="url(#kcc)"><rect x="1510.3" y="1274.7" width="42" height="114.6" fill="#1d1d1e"/><rect x="1508.8" y="1274.7" width="3" height="114.6" fill="#040404"/><rect x="1550.8" y="1274.7" width="3.4" height="114.6" fill="#030303"/><rect x="1511.8" y="1274.7" width="2" height="114.6" fill="#262627"/><rect x="1530.3" y="1277.5" width="2" height="41" fill="#d4d4d4"/></g><defs><clipPath id="kcd"><circle cx="1723.6" cy="1332" r="55.0" transform="rotate(34 1723.6 1332)"/></clipPath></defs><path d="M1694.3 1382.7L1689.6 1390.9M1672.9 1361.3L1664.7 1366.0M1665.0 1332.0L1655.6 1332.0M1672.9 1302.7L1664.7 1298.0M1694.3 1281.3L1689.6 1273.1M1723.6 1273.4L1723.6 1264.0M1752.9 1281.3L1757.6 1273.1M1774.3 1302.7L1782.5 1298.0M1782.2 1332.0L1791.6 1332.0M1774.3 1361.3L1782.5 1366.0M1752.9 1382.7L1757.6 1390.9" stroke="#c9d3e2" stroke-width="1.5" fill="none"/><ellipse cx="1723.6" cy="1335.5" rx="55.8" ry="55.3" fill="rgba(5,12,28,0.6)" filter="url(#ksh)"/><circle cx="1723.6" cy="1332" r="55.3" fill="url(#kg)"/><g transform="rotate(-34 1723.6 1332)" clip-path="url(#kcd)"><rect x="1702.6" y="1274.7" width="42" height="114.6" fill="#1d1d1e"/><rect x="1701.1" y="1274.7" width="3" height="114.6" fill="#040404"/><rect x="1743.1" y="1274.7" width="3.4" height="114.6" fill="#030303"/><rect x="1704.1" y="1274.7" width="2" height="114.6" fill="#262627"/><rect x="1722.6" y="1277.5" width="2" height="41" fill="#d4d4d4"/></g><circle cx="1175.6" cy="1267.8" r="13.6" fill="url(#led)"/><circle cx="1175.6" cy="1260.4" r="1" fill="#c9d3e6" opacity="0.8"/><circle cx="1175.6" cy="1300.1" r="13.6" fill="url(#led)"/><circle cx="1175.6" cy="1292.7" r="1" fill="#c9d3e6" opacity="0.8"/><circle cx="1175.6" cy="1332.4" r="13.6" fill="url(#led)"/><circle cx="1175.6" cy="1325.0" r="1" fill="#c9d3e6" opacity="0.8"/><circle cx="1175.6" cy="1364.7" r="13.6" fill="url(#led)"/><circle cx="1175.6" cy="1357.3" r="1" fill="#c9d3e6" opacity="0.8"/><circle cx="1175.6" cy="1397.0" r="13.6" fill="url(#led)"/><circle cx="1175.6" cy="1389.6" r="1" fill="#c9d3e6" opacity="0.8"/><circle cx="1175.6" cy="1429.3" r="13.6" fill="url(#led)"/><circle cx="1175.6" cy="1421.9" r="1" fill="#c9d3e6" opacity="0.8"/></svg>
</div></body></html>
